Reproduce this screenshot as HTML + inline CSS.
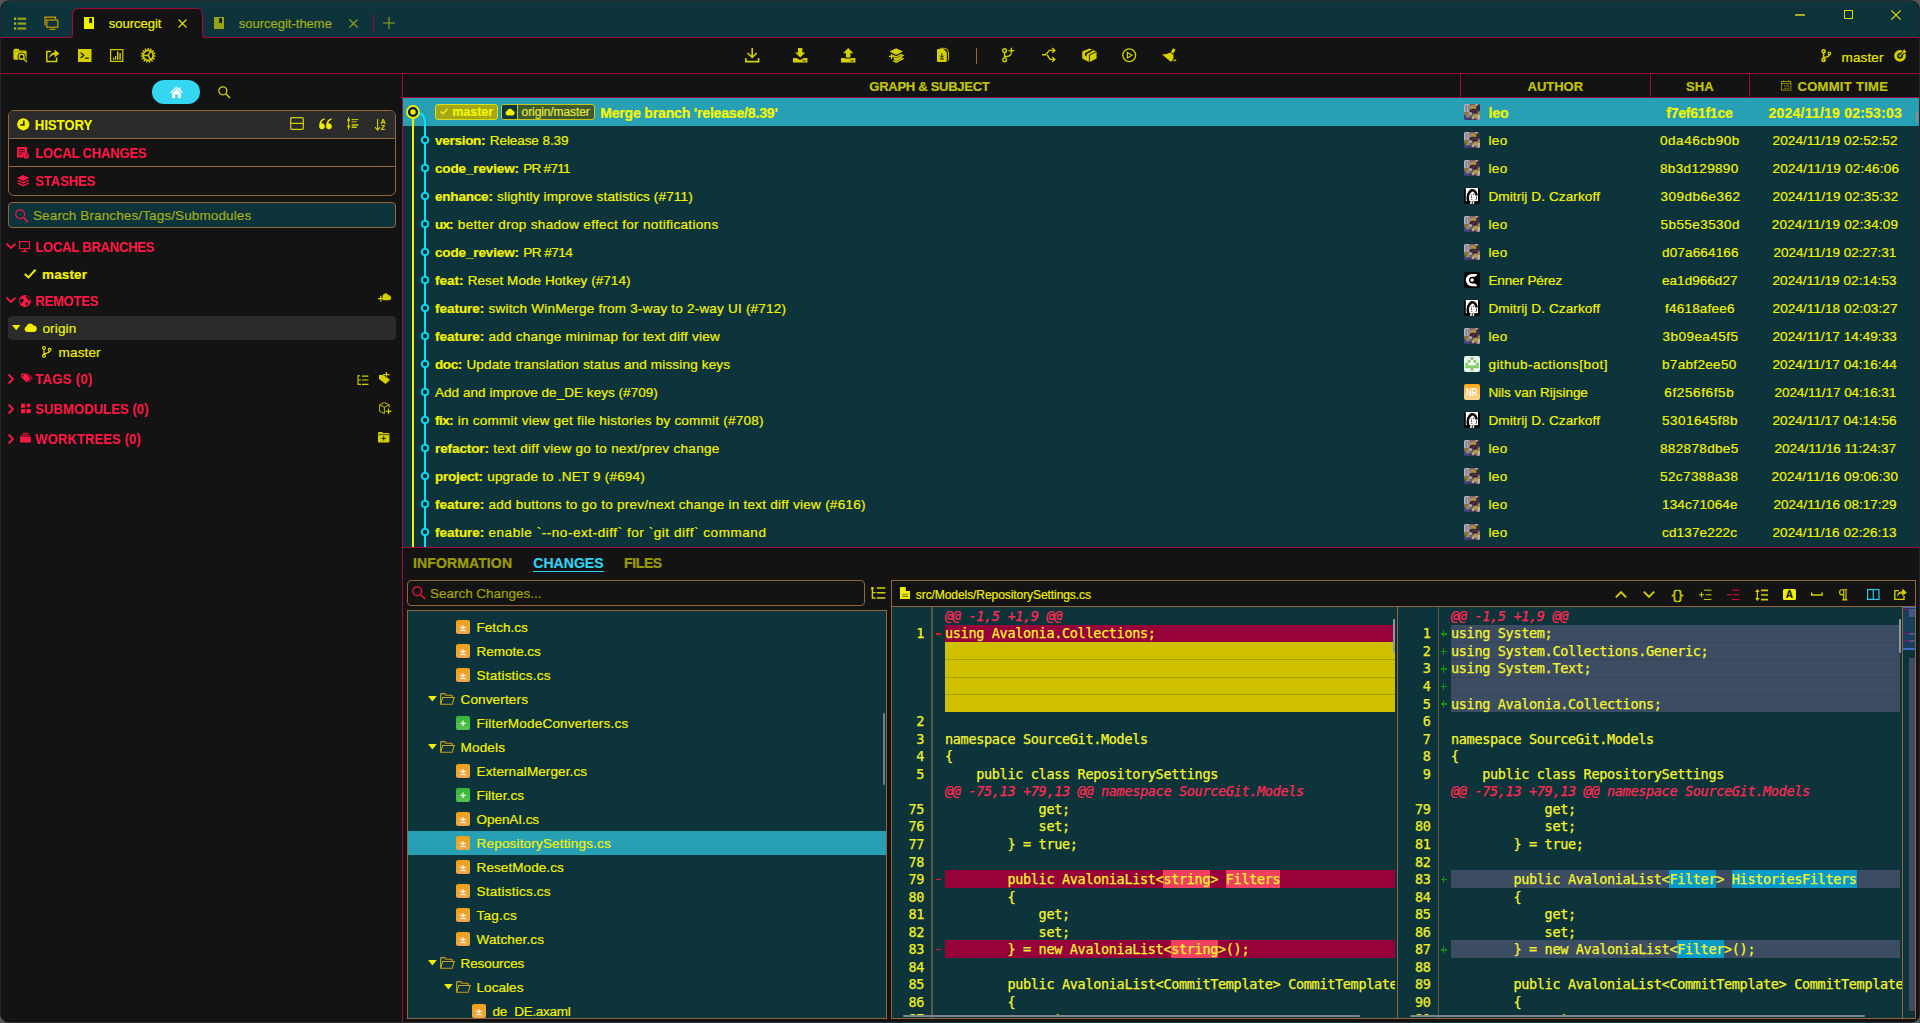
<!DOCTYPE html>
<html><head><meta charset="utf-8"><title>SourceGit</title>
<style>
*{box-sizing:border-box;margin:0;padding:0}
html,body{width:1920px;height:1023px;overflow:hidden;background:#555;}
body{font-family:"Liberation Sans","DejaVu Sans",sans-serif;font-size:14px;color:#f0f000;position:relative;-webkit-text-stroke:0.2px currentColor}
.abs{position:absolute}
.t{position:absolute;white-space:pre;line-height:1}
.b{font-weight:bold}
svg{position:absolute;overflow:visible}
.mono{font-family:"DejaVu Sans Mono","Liberation Mono",monospace;font-size:13.5px;letter-spacing:-0.3277px;-webkit-text-stroke:0.25px currentColor}
</style></head>
<body>
<div class="abs " style="left:1px;top:1px;width:1918px;height:1020.6px;background:#131313;border-radius:8px;box-shadow:0 0 0 0.6px #080808"></div>
<!-- titlebar -->
<div class="abs " style="left:1px;top:1px;width:1918px;height:37px;background:#0d333b;border-radius:8px 8px 0 0"></div>
<div class="abs " style="left:1px;top:37px;width:1918px;height:1px;background:#9b0b40"></div>
<svg style="left:64.6px;top:8px;" width="146" height="31" viewBox="0 0 146 31"><path d="M0 29.5 H4.2 Q7.500 29.5 7.5 26.2 V7 Q7.5 0.5 14 0.5 H131 Q137.500 0.5 137.5 7 V26.2 Q137.5 29.5 140.8 29.5 H145 V31 H0 Z" fill="#131313" stroke="none"/><path d="M0 29.5 H4.2 Q7.500 29.5 7.5 26.2 V7 Q7.5 0.5 14 0.5 H131 Q137.500 0.5 137.5 7 V26.2 Q137.5 29.5 140.8 29.5 H145" fill="none" stroke="#9b0b40" stroke-width="1.2"/></svg>
<svg style="left:14px;top:16.5px;" width="13" height="13" viewBox="0 0 13 13"><rect x="0" y="0.6" width="2.2" height="2.2" fill="#b9bd18"/><rect x="3.6" y="0.6" width="8.6" height="2.2" fill="rgba(240,240,0,0.6)"/><rect x="0" y="5.5" width="2.2" height="2.2" fill="#b9bd18"/><rect x="3.6" y="5.5" width="8.6" height="2.2" fill="rgba(240,240,0,0.6)"/><rect x="0" y="10.4" width="2.2" height="2.2" fill="#b9bd18"/><rect x="3.6" y="10.4" width="8.6" height="2.2" fill="rgba(240,240,0,0.6)"/></svg>
<svg style="left:43.5px;top:16px;" width="15" height="14" viewBox="0 0 15 14"><path d="M1 9.5 V1.2 H11.5 V3" fill="none" stroke="#d69a00" stroke-width="1.2"/><rect x="2.8" y="4" width="11" height="7.2" fill="none" stroke="#d69a00" stroke-width="1.2"/><path d="M5.5 13.3 H11.5" stroke="#d69a00" stroke-width="1.2"/></svg>
<svg style="left:84px;top:17px;" width="10" height="12" viewBox="0 0 10 12"><path d="M0 0 H10 V12 H0 Z" fill="#f2f200"/><path d="M5.2 1 H8 V6.6 L6.6 5.4 L5.2 6.6 Z" fill="#0c1a1a"/></svg>
<div class="t " style="left:108.7px;top:15.0px;font-size:13px;line-height:17px;color:#f2f200;">sourcegit</div>
<svg style="left:177.5px;top:18.5px;" width="9" height="9" viewBox="0 0 9 9"><path d="M0.5 0.5 L8.5 8.5 M8.5 0.5 L0.5 8.5" stroke="#e6e600" stroke-width="1.1" fill="none"/></svg>
<svg style="left:214px;top:17px;" width="10" height="12" viewBox="0 0 10 12"><path d="M0 0 H10 V12 H0 Z" fill="rgba(240,240,0,0.6)"/><path d="M5.2 1 H8 V6.6 L6.6 5.4 L5.2 6.6 Z" fill="#0c1a1a"/></svg>
<div class="t " style="left:238.7px;top:15.0px;font-size:13px;line-height:17px;color:rgba(240,240,0,0.6);">sourcegit-theme</div>
<svg style="left:348.5px;top:18.5px;" width="9" height="9" viewBox="0 0 9 9"><path d="M0.5 0.5 L8.5 8.5 M8.5 0.5 L0.5 8.5" stroke="rgba(240,240,0,0.6)" stroke-width="1.1" fill="none"/></svg>
<div class="abs " style="left:372.5px;top:14px;width:1px;height:19px;background:#9b0b40"></div>
<svg style="left:383px;top:17px;" width="12" height="12" viewBox="0 0 12 12"><path d="M6 0 V12 M0 6 H12" stroke="rgba(240,240,0,0.6)" stroke-width="1.1" fill="none"/></svg>
<div class="abs " style="left:1795px;top:14px;width:10px;height:2px;background:#a8ac1c"></div>
<div class="abs " style="left:1844px;top:10px;width:9.4px;height:9.3px;border:1.3px solid #d6d600"></div>
<svg style="left:1891px;top:10px;" width="10" height="10" viewBox="0 0 10 10"><path d="M0.3 0.3 L9.7 9.7 M9.7 0.3 L0.3 9.7" stroke="#e0e000" stroke-width="1.2" fill="none"/></svg>
<!-- toolbar -->
<div class="abs " style="left:1px;top:38px;width:1918px;height:35px;background:#131313"></div>
<div class="abs " style="left:1px;top:73px;width:1918px;height:1px;background:#9b0b40"></div>
<svg style="left:13px;top:48.3px;" width="15" height="14" viewBox="0 0 15 14"><path d="M0.4 2.4 Q0.4 0.8 2 0.8 H5.4 L6.8 2.4 H12.4 Q13.6 2.4 13.6 3.6 V10.6 Q13.6 11.8 12.4 11.8 H1.6 Q0.4 11.8 0.4 10.6 Z" fill="#d4d000"/><path d="M1.4 3.4 H12.6" stroke="#131313" stroke-width="0.5" opacity="0.5"/><circle cx="8.6" cy="8.8" r="4.1" fill="#131313"/><path d="M10 10.4 L14.4 14.6" stroke="#131313" stroke-width="3.4"/><circle cx="8.6" cy="8.8" r="2.5" fill="none" stroke="#d4d000" stroke-width="1.4"/><path d="M10.6 10.8 L14 14" stroke="#d4d000" stroke-width="1.5"/></svg>
<svg style="left:45.7px;top:49px;" width="14" height="13" viewBox="0 0 14 13"><path d="M5 2.6 H0.8 V12.4 H10.6 V8.6" fill="none" stroke="#d4d000" stroke-width="1.5"/><path d="M3.2 9.6 Q3.4 3.6 8.6 3.4 V0.4 L13.4 4.6 L8.6 8.6 V5.8 Q5 5.8 3.2 9.6 Z" fill="#d4d000"/></svg>
<svg style="left:77.8px;top:49px;" width="14" height="13" viewBox="0 0 14 13"><rect x="0" y="0" width="13.5" height="13" fill="#d4d000"/><path d="M2.6 3.6 L5.8 6.3 L2.6 9" fill="none" stroke="#131313" stroke-width="1.2"/><path d="M6.8 9.2 H10.8" stroke="#131313" stroke-width="1.2"/></svg>
<svg style="left:109.8px;top:49px;" width="14" height="13" viewBox="0 0 14 13"><rect x="0.6" y="0.6" width="12.2" height="11.8" fill="none" stroke="#d4d000" stroke-width="1.2"/><rect x="3" y="8.6" width="1.2" height="2.2" fill="#d4d000"/><rect x="5" y="7" width="1.2" height="3.8" fill="#d4d000"/><rect x="7" y="2.4" width="1.4" height="8.4" fill="#d4d000"/><rect x="9.4" y="4" width="1.4" height="6.8" fill="#d4d000"/></svg>
<svg style="left:141px;top:47.5px;" width="15" height="15" viewBox="0 0 15 15"><g transform="translate(7.2,7.4)"><rect x="-0.7" y="-7.4" width="1.4" height="2" fill="#d4d000" transform="rotate(0)"/><rect x="-0.7" y="-7.4" width="1.4" height="2" fill="#d4d000" transform="rotate(24)"/><rect x="-0.7" y="-7.4" width="1.4" height="2" fill="#d4d000" transform="rotate(48)"/><rect x="-0.7" y="-7.4" width="1.4" height="2" fill="#d4d000" transform="rotate(72)"/><rect x="-0.7" y="-7.4" width="1.4" height="2" fill="#d4d000" transform="rotate(96)"/><rect x="-0.7" y="-7.4" width="1.4" height="2" fill="#d4d000" transform="rotate(120)"/><rect x="-0.7" y="-7.4" width="1.4" height="2" fill="#d4d000" transform="rotate(144)"/><rect x="-0.7" y="-7.4" width="1.4" height="2" fill="#d4d000" transform="rotate(168)"/><rect x="-0.7" y="-7.4" width="1.4" height="2" fill="#d4d000" transform="rotate(192)"/><rect x="-0.7" y="-7.4" width="1.4" height="2" fill="#d4d000" transform="rotate(216)"/><rect x="-0.7" y="-7.4" width="1.4" height="2" fill="#d4d000" transform="rotate(240)"/><rect x="-0.7" y="-7.4" width="1.4" height="2" fill="#d4d000" transform="rotate(264)"/><rect x="-0.7" y="-7.4" width="1.4" height="2" fill="#d4d000" transform="rotate(288)"/><rect x="-0.7" y="-7.4" width="1.4" height="2" fill="#d4d000" transform="rotate(312)"/><rect x="-0.7" y="-7.4" width="1.4" height="2" fill="#d4d000" transform="rotate(336)"/><circle r="5" fill="none" stroke="#d4d000" stroke-width="1.7"/><path d="M0 0 L-4.6 0 M0 0 L2.4 -4.2 M0 0 L2.4 4.2" stroke="#d4d000" stroke-width="1.5"/></g></svg>
<svg style="left:744.6px;top:47.8px;" width="15" height="15" viewBox="0 0 15 15"><path d="M7.2 0 V9 M2.6 5 L7.2 9.4 L11.8 5" fill="none" stroke="#d4d000" stroke-width="1.6"/><path d="M0.8 10 V13.6 H13.6 V10" fill="none" stroke="#d4d000" stroke-width="1.6"/></svg>
<svg style="left:792.8px;top:47.8px;" width="15" height="15" viewBox="0 0 15 15"><path d="M5 0 H9.4 V4.4 H12.4 L7.2 9.6 L2 4.4 H5 Z" fill="#d4d000"/><path d="M0 10 H3.4 L7.2 12 L11 10 H14.4 V14.4 H0 Z" fill="#d4d000"/><rect x="9.6" y="12.4" width="3" height="0.9" fill="#131313"/></svg>
<svg style="left:840.8px;top:47.8px;" width="15" height="15" viewBox="0 0 15 15"><path d="M5 9.4 H9.4 V5.2 H12.4 L7.2 0 L2 5.2 H5 Z" fill="#d4d000"/><path d="M0 10 H4 V10.6 H10.4 V10 H14.4 V14.4 H0 Z" fill="#d4d000"/><rect x="9.6" y="12.4" width="3" height="0.9" fill="#131313"/></svg>
<svg style="left:888.9px;top:47.8px;" width="15" height="15" viewBox="0 0 15 15"><path d="M7.2 0.2 L14 3.6 L7.2 7 L0.4 3.6 Z" fill="#d4d000"/><path d="M3.4 7.2 L7.2 9 L12 6.6 L14 7.6 L7.2 11 L4.6 9.7" fill="none" stroke="#d4d000" stroke-width="1.3"/><path d="M5 11 L7.2 12.2 L12 9.8 L14 10.8 L7.2 14.2 L4.2 12.7" fill="none" stroke="#d4d000" stroke-width="1.3"/><path d="M0 8.4 H5 M2.5 5.9 V10.9" stroke="#d4d000" stroke-width="1.3"/></svg>
<svg style="left:936.7px;top:47.8px;" width="13" height="15" viewBox="0 0 13 15"><path d="M0 2 Q0 1 1 1 H6.6 L9.8 4.2 V13 Q9.8 14 8.8 14 H1 Q0 14 0 13 Z" fill="#d4d000"/><path d="M3 0.3 H8 Q11.6 1 11.6 5 V12.4" fill="none" stroke="#d4d000" stroke-width="0.9"/><path d="M4.9 5.4 V9.2 M3.2 7.8 L4.9 9.6 L6.6 7.8 M3 11 H6.8" stroke="#131313" stroke-width="1" fill="none"/></svg>
<div class="abs " style="left:976px;top:48px;width:1px;height:16px;background:#94653a"></div>
<svg style="left:1001.6px;top:47.8px;" width="14" height="15" viewBox="0 0 14 15"><circle cx="2.6" cy="2.6" r="1.9" fill="none" stroke="#d4d000" stroke-width="1.4"/><circle cx="2.6" cy="11.8" r="1.9" fill="none" stroke="#d4d000" stroke-width="1.4"/><path d="M2.6 4.6 V9.8 M2.6 8.8 Q8.6 8.6 9 5.6" fill="none" stroke="#d4d000" stroke-width="1.4"/><path d="M6.4 2.6 H12.4 M9.4 -0.2 V5.4" stroke="#d4d000" stroke-width="1.4"/></svg>
<svg style="left:1042px;top:48.2px;" width="14" height="14" viewBox="0 0 14 14"><path d="M0 6.8 H3.6 L7.4 2.4 H12.4 M5.2 6.8 L8 11.4 H12.4" fill="none" stroke="#d4d000" stroke-width="1.4"/><path d="M10.2 0 L12.8 2.4 L10.2 4.8 M10.2 9 L12.8 11.4 L10.2 13.8" fill="none" stroke="#d4d000" stroke-width="1.4"/></svg>
<svg style="left:1081.5px;top:47.8px;" width="15" height="15" viewBox="0 0 15 15"><path d="M7.4 0.4 L14.6 3.6 V10.6 L7.4 14.2 L0.2 10.6 V3.6 Z" fill="#d4d000"/><path d="M7.4 7 V14 M7.4 7 L14.4 3.8" stroke="#131313" stroke-width="0.9" fill="none"/><path d="M3 5 L9.6 1.8 L11.4 2.6 L4.6 5.9 V8.6 L3 7.8 Z" fill="#131313"/></svg>
<svg style="left:1121.6px;top:47.8px;" width="15" height="15" viewBox="0 0 15 15"><circle cx="7.2" cy="7.2" r="6.4" fill="none" stroke="#d4d000" stroke-width="1.3"/><path d="M5.4 4.4 L10 7.2 L5.4 10 Z" fill="none" stroke="#d4d000" stroke-width="1.2"/></svg>
<svg style="left:1161.8px;top:47.8px;" width="15" height="15" viewBox="0 0 15 15"><path d="M11 0.2 L13.6 1.6 L11.4 5.6 L8.8 4.2 Z" fill="#d4d000"/><path d="M8.2 4.6 L11.2 6.4 Q12.6 10.4 9 14 L0 6.6 Q5 6.6 8.2 4.6 Z" fill="#d4d000"/><path d="M11 12.6 H14 M12.6 11 L14 12.6" stroke="#d4d000" stroke-width="0.9" fill="none"/></svg>
<svg style="left:1821.4px;top:49px;" width="11" height="13" viewBox="0 0 11 13"><circle cx="2.6" cy="2.3" r="1.5" fill="none" stroke="#d4d000" stroke-width="1.7"/><circle cx="2.6" cy="10.9" r="1.5" fill="none" stroke="#d4d000" stroke-width="1.7"/><circle cx="8.4" cy="4.4" r="1.3" fill="none" stroke="#d4d000" stroke-width="1.2"/><path d="M2.6 3.8 V9.4 M2.6 8.2 Q7.8 8.2 8.3 5.8" fill="none" stroke="#d4d000" stroke-width="1.6"/></svg>
<div class="t " style="left:1841.6px;top:48.65px;font-size:13.5px;line-height:17.5px;color:#e8e800;letter-spacing:0.107px;">master</div>
<svg style="left:1893.6px;top:49px;" width="13" height="13" viewBox="0 0 13 13"><circle cx="6" cy="6.8" r="4.4" fill="none" stroke="#d4d000" stroke-width="3"/><circle cx="6" cy="6.8" r="1.1" fill="none" stroke="#d4d000" stroke-width="0.9"/><path d="M6.4 6.400 L12.400 0.400" stroke="#131313" stroke-width="3.2"/><path d="M6 6.800 L9.800 3" stroke="#d4d000" stroke-width="1.1"/><path d="M8.600 4.200 L9 1.800 L10.800 0 L11 1.900 L12.800 2.100 L11 3.900 Z" fill="#d4d000"/></svg>
<!-- sidebar -->
<div class="abs " style="left:402px;top:74px;width:1px;height:947.6px;background:#9b0b40"></div>
<div class="abs " style="left:152px;top:80px;width:48px;height:24px;background:#35d6f2;border-radius:12px"></div>
<svg style="left:169.5px;top:86px;" width="13" height="12" viewBox="0 0 13 12"><path d="M6.5 0.4 L0 6.4 L0.9 7.3 L6.5 2.2 L12.1 7.3 L13 6.4 L10.6 4.2 V1.4 H9.4 V3.1 Z" fill="#fff"/><path d="M6.5 3.2 L2 7.3 V12 H5.2 V8.4 H7.8 V12 H11 V7.3 Z" fill="#fff"/></svg>
<svg style="left:218px;top:86px;" width="13" height="13" viewBox="0 0 13 13"><circle cx="4.8" cy="4.8" r="4" fill="none" stroke="#d4d000" stroke-width="1.3"/><path d="M7.8 7.8 L12 12" stroke="#d4d000" stroke-width="1.5"/></svg>
<div class="abs " style="left:8px;top:110px;width:388px;height:86px;border:1px solid #94653a;border-radius:6px;overflow:hidden"><div class="abs " style="left:0px;top:0px;width:386px;height:27px;background:#2b2b2b"></div><div class="abs " style="left:0px;top:27px;width:386px;height:1px;background:#94653a"></div><div class="abs " style="left:0px;top:55px;width:386px;height:1px;background:#94653a"></div></div>
<svg style="left:17px;top:118px;" width="13" height="13" viewBox="0 0 13 13"><circle cx="6.3" cy="6.3" r="6.1" fill="#f0f000"/><path d="M6.8 2.6 V6.8 H3.4" fill="none" stroke="#2b2b2b" stroke-width="1.7"/></svg>
<div class="t " style="left:35px;top:116.5px;font-size:13px;line-height:17px;color:#f4f400;font-weight:bold;letter-spacing:0.05px;transform:scaleY(1.07);transform-origin:50% 75%;">HISTORY</div>
<svg style="left:17px;top:147px;" width="13" height="13" viewBox="0 0 13 13"><path d="M0 0.8 Q0 0 0.8 0 H9.2 Q10 0 10 0.8 V6.2 A3.6 3.6 0 0 0 6 10.6 H0.8 Q0 10.6 0 9.8 Z" fill="#ff1744"/><path d="M1.6 2.6 H8 M1.6 4.8 H8 M1.6 7 H5" stroke="#131313" stroke-width="0.9"/><circle cx="9.2" cy="9" r="2.8" fill="#ff1744"/><path d="M9.2 7.4 V9.2 H10.6" fill="none" stroke="#131313" stroke-width="0.8"/></svg>
<div class="t " style="left:35.5px;top:144.5px;font-size:13px;line-height:17px;color:#ff1744;font-weight:bold;letter-spacing:-0.14px;transform:scaleY(1.07);transform-origin:50% 75%;">LOCAL CHANGES</div>
<svg style="left:17px;top:175px;" width="13" height="12" viewBox="0 0 13 12"><path d="M6.2 0 L12.4 3 L6.2 6 L0 3 Z" fill="#ff1744"/><path d="M1.6 5 L6.2 7.2 L10.8 5 L12.4 5.8 L6.2 8.8 L0 5.8 Z" fill="#ff1744"/><path d="M1.6 7.8 L6.2 10 L10.8 7.8 L12.4 8.6 L6.2 11.6 L0 8.6 Z" fill="#ff1744"/></svg>
<div class="t " style="left:35.5px;top:172.5px;font-size:13px;line-height:17px;color:#ff1744;font-weight:bold;letter-spacing:-0.05px;transform:scaleY(1.07);transform-origin:50% 75%;">STASHES</div>
<svg style="left:290px;top:117px;" width="14" height="13" viewBox="0 0 14 13"><rect x="0.7" y="0.7" width="12.6" height="11.6" rx="1" fill="none" stroke="#d4d000" stroke-width="1.2"/><path d="M0.7 6.4 H13.3" stroke="#d4d000" stroke-width="1.2"/></svg>
<svg style="left:318.6px;top:117.8px;" width="13" height="12" viewBox="0 0 13 12"><path d="M5.6 0.2 Q0.2 1.6 0.2 7.6 V8.6 A2.8 3 0 1 0 2.4 5.4 Q2.6 2.6 5.8 1.5 Z" fill="#f0f000"/><path d="M12.6 0.2 Q7.2 1.6 7.2 7.6 V8.6 A2.8 3 0 1 0 9.4 5.4 Q9.6 2.6 12.8 1.5 Z" fill="#f0f000"/></svg>
<svg style="left:346.6px;top:117.4px;" width="12" height="13" viewBox="0 0 12 13"><path d="M1.6 0 V12.6" stroke="#d4d000" stroke-width="1"/><path d="M0 3 L1.6 1.2 L3.2 3 Z M0 9.6 L1.6 11.4 L3.2 9.6 Z" fill="#d4d000"/><circle cx="1.6" cy="3.6" r="1.2" fill="#d4d000"/><circle cx="1.6" cy="9" r="1.2" fill="#d4d000"/><path d="M4.6 2.6 H11.4 M4.6 4.8 H9.6" stroke="#d4d000" stroke-width="1"/><path d="M4.6 8 H11.4 M4.6 10.2 H9.6" stroke="#d4d000" stroke-width="1.5"/></svg>
<svg style="left:375px;top:119px;" width="6" height="12" viewBox="0 0 6 12"><path d="M2.6 0 V11 M0 8.2 L2.6 11.2 L5.2 8.2" fill="none" stroke="#d4d000" stroke-width="1.1"/></svg>
<div class="t " style="left:380.6px;top:116.1px;font-size:7px;line-height:11px;color:#d4d000;font-weight:bold;">A</div>
<div class="t " style="left:380.8px;top:122.1px;font-size:7px;line-height:11px;color:#d4d000;font-weight:bold;">Z</div>
<div class="abs " style="left:8px;top:202px;width:388px;height:26px;border:1px solid #94653a;border-radius:4px;background:#0d333b"></div>
<svg style="left:15px;top:208.6px;" width="14" height="14" viewBox="0 0 14 14"><circle cx="5.2" cy="5.2" r="4.4" fill="none" stroke="#ff1744" stroke-width="1.2"/><path d="M8.4 8.4 L13 13" stroke="#ff1744" stroke-width="1.4"/></svg>
<div class="t " style="left:33px;top:206.75px;font-size:13.5px;line-height:17.5px;color:rgba(240,240,0,0.6);letter-spacing:0.12px;">Search Branches/Tags/Submodules</div>
<svg style="left:6px;top:243px;" width="10" height="6" viewBox="0 0 10 6"><path d="M0.5 0.6 L5 5 L9.5 0.6" fill="none" stroke="#ff1744" stroke-width="1.8"/></svg>
<svg style="left:19px;top:241px;" width="11" height="11" viewBox="0 0 11 11"><rect x="0.6" y="0.6" width="9.8" height="7" fill="none" stroke="#ff1744" stroke-width="1.1"/><path d="M5.5 7.6 V10 M2.4 10.4 H8.6" stroke="#ff1744" stroke-width="1.1"/></svg>
<div class="t " style="left:35.5px;top:238.5px;font-size:13px;line-height:17px;color:#ff1744;font-weight:bold;letter-spacing:-0.2px;transform:scaleY(1.07);transform-origin:50% 75%;">LOCAL BRANCHES</div>
<svg style="left:24px;top:269px;" width="13" height="10" viewBox="0 0 13 10"><path d="M0.8 5 L4.4 8.4 L11.6 0.8" fill="none" stroke="#f0f000" stroke-width="2"/></svg>
<div class="t " style="left:42px;top:265.65px;font-size:13.5px;line-height:17.5px;color:#f4f400;font-weight:bold;letter-spacing:0.144px;">master</div>
<svg style="left:6px;top:297px;" width="10" height="6" viewBox="0 0 10 6"><path d="M0.5 0.6 L5 5 L9.5 0.6" fill="none" stroke="#ff1744" stroke-width="1.8"/></svg>
<svg style="left:19px;top:295px;" width="12" height="12" viewBox="0 0 12 12"><circle cx="6" cy="6" r="5.9" fill="#ff1744"/><path d="M1.2 4.2 Q3.4 3 4.6 4.4 Q5.4 5.4 4.2 6.2 Q2.6 6.8 3 8.6 L1.6 8 Q0.6 6 1.2 4.2 Z M6.8 0.8 Q6 2.2 7.6 2.8 Q9 3 8.8 4.4 Q8.6 5.6 10.2 5.6 L11.4 5 Q11 2 8.6 1 Z M6.2 7.6 Q8 7 9 8.2 Q9.2 9.6 7.8 10.8 Q6.4 10.4 6.2 7.6 Z" fill="#131313"/></svg>
<div class="t " style="left:35.5px;top:292.5px;font-size:13px;line-height:17px;color:#ff1744;font-weight:bold;letter-spacing:-0.18px;transform:scaleY(1.07);transform-origin:50% 75%;">REMOTES</div>
<svg style="left:378.4px;top:292.4px;" width="13" height="10" viewBox="0 0 13 10"><path d="M4.4 4.2 A3.2 3.2 0 0 1 10.4 3 A2.6 2.6 0 0 1 10.6 8.2 H5 Z" fill="#d4d000"/><path d="M0 6.6 H5.6 M2.8 3.8 V9.4" stroke="#d4d000" stroke-width="1.2"/></svg>
<div class="abs " style="left:8px;top:316px;width:388px;height:24px;background:#2b2b2b;border-radius:4px"></div>
<svg style="left:12px;top:325px;" width="9" height="6" viewBox="0 0 9 6"><path d="M0 0 H8.4 L4.2 5.2 Z" fill="#f0f000"/></svg>
<svg style="left:23.5px;top:323px;" width="13" height="9" viewBox="0 0 13 9"><path d="M3 9 A3 3 0 0 1 2.6 3.2 A3.6 3.6 0 0 1 9.4 2.6 A3.2 3.2 0 0 1 9.6 9 Z" fill="#f0f000"/></svg>
<div class="t " style="left:42.4px;top:319.65px;font-size:13.5px;line-height:17.5px;color:#f0f000;letter-spacing:0.174px;">origin</div>
<svg style="left:41.5px;top:346.4px;" width="10" height="12" viewBox="0 0 10 12"><circle cx="2" cy="1.9" r="1.4" fill="none" stroke="#f0f000" stroke-width="1.1"/><circle cx="2" cy="9.8" r="1.4" fill="none" stroke="#f0f000" stroke-width="1.1"/><circle cx="7.6" cy="3.8" r="1.4" fill="none" stroke="#f0f000" stroke-width="1.1"/><path d="M2 3.3 V8.4 M2 7.6 Q7.2 7.4 7.6 5.2" fill="none" stroke="#f0f000" stroke-width="1.1"/></svg>
<div class="t " style="left:58.6px;top:344.05px;font-size:13.5px;line-height:17.5px;color:#f0f000;letter-spacing:0.147px;">master</div>
<svg style="left:8px;top:374px;" width="6" height="10" viewBox="0 0 6 10"><path d="M0.6 0.5 L5 5 L0.6 9.5" fill="none" stroke="#ff1744" stroke-width="1.8"/></svg>
<svg style="left:20.6px;top:373px;" width="12" height="10" viewBox="0 0 12 10"><path d="M0.4 0.6 H5 L9.6 5.2 L5.6 9.2 L0.4 4.6 Z" fill="#ff1744"/><circle cx="2.4" cy="2.6" r="0.8" fill="#131313"/><path d="M6.6 0.6 L11.4 5.2 L7.4 9.2" fill="none" stroke="#ff1744" stroke-width="1"/></svg>
<div class="t " style="left:35.5px;top:370.9px;font-size:13px;line-height:17px;color:#ff1744;font-weight:bold;letter-spacing:0.36px;transform:scaleY(1.07);transform-origin:50% 75%;">TAGS (0)</div>
<svg style="left:357px;top:374.6px;" width="12" height="11" viewBox="0 0 12 11"><path d="M1 0 V9.4 H4 M1 5 H4" fill="none" stroke="#d4d000" stroke-width="1.1"/><path d="M1 0.8 H2.6" stroke="#d4d000" stroke-width="1.6"/><path d="M5 1.2 H11.4 M5 5 H11.4 M5 9.4 H11.4" stroke="#d4d000" stroke-width="1.2"/></svg>
<svg style="left:378.6px;top:372px;" width="12" height="12" viewBox="0 0 12 12"><path d="M0 3 H5.4 L11 8 L6.6 12 L0 7 Z" fill="#d4d000"/><path d="M4 2.6 H10.6 M7.4 0 V5.6" stroke="#d4d000" stroke-width="1.3"/><path d="M4.6 3.4 H6.6 V5 H8.2 V3.4" fill="none" stroke="#131313" stroke-width="0.6"/></svg>
<svg style="left:8px;top:404px;" width="6" height="10" viewBox="0 0 6 10"><path d="M0.6 0.5 L5 5 L0.6 9.5" fill="none" stroke="#ff1744" stroke-width="1.8"/></svg>
<svg style="left:20.8px;top:403px;" width="10" height="11" viewBox="0 0 10 11"><rect x="0" y="0.6" width="4.2" height="4.2" fill="#ff1744"/><rect x="0" y="6" width="4.2" height="4.2" fill="#ff1744"/><rect x="5.4" y="6" width="4.2" height="4.2" fill="#ff1744"/><path d="M7.5 0 L9.9 2.4 L7.5 4.8 L5.1 2.4 Z" fill="#ff1744"/></svg>
<div class="t " style="left:35.5px;top:400.9px;font-size:13px;line-height:17px;color:#ff1744;font-weight:bold;letter-spacing:0.1px;transform:scaleY(1.07);transform-origin:50% 75%;">SUBMODULES (0)</div>
<svg style="left:378.6px;top:402px;" width="13" height="13" viewBox="0 0 13 13"><path d="M5.4 0.5 L10.2 2.8 V5.4 M5.4 11.6 L0.6 9.2 V2.8 L5.4 0.5 M0.6 2.8 L5.4 5.2 L10.2 2.8 M5.4 5.2 V11.6" fill="none" stroke="#d4d000" stroke-width="0.9"/><path d="M6.8 9.4 H12.4 M9.6 6.6 V12.2" stroke="#d4d000" stroke-width="1.1"/></svg>
<svg style="left:8px;top:434px;" width="6" height="10" viewBox="0 0 6 10"><path d="M0.6 0.5 L5 5 L0.6 9.5" fill="none" stroke="#ff1744" stroke-width="1.8"/></svg>
<svg style="left:20.2px;top:433.4px;" width="11" height="10" viewBox="0 0 11 10"><path d="M2.6 0.4 H8.2 M1.4 2.2 H9.4" stroke="#ff1744" stroke-width="1"/><path d="M0 3.6 H10.8 V8.4 Q10.8 9.4 9.8 9.4 H1 Q0 9.4 0 8.4 Z" fill="#ff1744"/></svg>
<div class="t " style="left:35.5px;top:430.9px;font-size:13px;line-height:17px;color:#ff1744;font-weight:bold;letter-spacing:0.13px;transform:scaleY(1.07);transform-origin:50% 75%;">WORKTREES (0)</div>
<svg style="left:378px;top:432px;" width="12" height="11" viewBox="0 0 12 11"><path d="M0 1 Q0 0 1 0 H4 L5 1 H10.4 Q11.4 1 11.4 2 V9.6 Q11.4 10.6 10.4 10.6 H1 Q0 10.6 0 9.6 Z" fill="#d4d000"/><path d="M0.4 2.6 H11" stroke="#131313" stroke-width="0.7"/><path d="M3.4 6.4 H8 M5.7 4.2 V8.6" stroke="#131313" stroke-width="0.9"/></svg>
<!-- history -->
<div class="abs " style="left:403px;top:74px;width:1516px;height:23px;background:#131313"></div>
<div class="abs " style="left:403px;top:97px;width:1516px;height:1px;background:#9b0b40"></div>
<div class="abs " style="left:1460px;top:74px;width:1px;height:23px;background:#9b0b40"></div>
<div class="abs " style="left:1650px;top:74px;width:1px;height:23px;background:#9b0b40"></div>
<div class="abs " style="left:1749px;top:74px;width:1px;height:23px;background:#9b0b40"></div>
<div class="t " style="left:869.3px;top:78.0px;font-size:13px;line-height:17px;color:#c2c40c;font-weight:bold;letter-spacing:-0.27px;">GRAPH &amp; SUBJECT</div>
<div class="t " style="left:1527.5px;top:78.0px;font-size:13px;line-height:17px;color:#c2c40c;font-weight:bold;">AUTHOR</div>
<div class="t " style="left:1686px;top:78.0px;font-size:13px;line-height:17px;color:#c2c40c;font-weight:bold;letter-spacing:0.1px;">SHA</div>
<svg style="left:1780.6px;top:80px;" width="11" height="11" viewBox="0 0 11 11"><rect x="0.5" y="1.5" width="9.4" height="8.6" fill="none" stroke="rgba(240,240,0,0.6)" stroke-width="0.9"/><path d="M0.5 3.6 H10 M2.6 0.4 V2 M7.8 0.4 V2" stroke="rgba(240,240,0,0.6)" stroke-width="0.9"/><text x="5.2" y="9" font-size="5" font-family="Liberation Sans, sans-serif" fill="rgba(240,240,0,0.6)" text-anchor="middle">15</text></svg>
<div class="t " style="left:1797.5px;top:78.0px;font-size:13px;line-height:17px;color:#c2c40c;font-weight:bold;letter-spacing:0.3px;">COMMIT TIME</div>
<div class="abs " style="left:403px;top:98px;width:1516px;height:449px;background:#0d333b"></div>
<div class="abs " style="left:403px;top:98px;width:1516px;height:28px;background:#27a0b4"></div>
<div class="abs " style="left:403px;top:547px;width:1516px;height:1px;background:#9b0b40"></div>
<div class="abs " style="left:1916.4px;top:110.5px;width:2px;height:11.5px;background:#8a8f92;border-radius:1px"></div>
<svg style="left:403px;top:98px;" width="40" height="449" viewBox="0 0 40 449"><path d="M10 14 V449" stroke="#f0f000" stroke-width="2" fill="none"/><path d="M16 15 Q22 15.500 22 26 V449" stroke="#00e5ff" stroke-width="2" fill="none"/><circle cx="22" cy="42" r="3.2" fill="#0d333b" stroke="#00e5ff" stroke-width="1.7"/><circle cx="22" cy="70" r="3.2" fill="#0d333b" stroke="#00e5ff" stroke-width="1.7"/><circle cx="22" cy="98" r="3.2" fill="#0d333b" stroke="#00e5ff" stroke-width="1.7"/><circle cx="22" cy="126" r="3.2" fill="#0d333b" stroke="#00e5ff" stroke-width="1.7"/><circle cx="22" cy="154" r="3.2" fill="#0d333b" stroke="#00e5ff" stroke-width="1.7"/><circle cx="22" cy="182" r="3.2" fill="#0d333b" stroke="#00e5ff" stroke-width="1.7"/><circle cx="22" cy="210" r="3.2" fill="#0d333b" stroke="#00e5ff" stroke-width="1.7"/><circle cx="22" cy="238" r="3.2" fill="#0d333b" stroke="#00e5ff" stroke-width="1.7"/><circle cx="22" cy="266" r="3.2" fill="#0d333b" stroke="#00e5ff" stroke-width="1.7"/><circle cx="22" cy="294" r="3.2" fill="#0d333b" stroke="#00e5ff" stroke-width="1.7"/><circle cx="22" cy="322" r="3.2" fill="#0d333b" stroke="#00e5ff" stroke-width="1.7"/><circle cx="22" cy="350" r="3.2" fill="#0d333b" stroke="#00e5ff" stroke-width="1.7"/><circle cx="22" cy="378" r="3.2" fill="#0d333b" stroke="#00e5ff" stroke-width="1.7"/><circle cx="22" cy="406" r="3.2" fill="#0d333b" stroke="#00e5ff" stroke-width="1.7"/><circle cx="22" cy="434" r="3.2" fill="#0d333b" stroke="#00e5ff" stroke-width="1.7"/><circle cx="10" cy="14" r="6" fill="#0b1f3a" stroke="#f0f000" stroke-width="1.8"/><circle cx="10" cy="14" r="2.7" fill="#f0f000"/></svg>
<div class="abs " style="left:435px;top:104px;width:63px;height:16px;background:#a4a818;border:1px solid #dede14;border-radius:3px"></div>
<svg style="left:440px;top:108.4px;" width="8" height="7" viewBox="0 0 8 7"><path d="M0.6 3.4 L3 5.8 L7.4 0.8" fill="none" stroke="#e8e818" stroke-width="1.7"/></svg>
<div class="t " style="left:452.2px;top:103.75px;font-size:12.5px;line-height:16.5px;color:#f6f600;font-weight:bold;">master</div>
<div class="abs " style="left:501px;top:104px;width:94px;height:16px;background:#3f5a30;border:1px solid #c4c814;border-radius:3px;overflow:hidden"><div class="abs " style="left:0px;top:0px;width:15px;height:14px;background:#0f3540"></div><div class="abs " style="left:15px;top:0px;width:1px;height:14px;background:#c4c814"></div></div>
<svg style="left:505px;top:108px;" width="10" height="8" viewBox="0 0 10 8"><path d="M2.4 7.4 A2.4 2.4 0 0 1 2.2 2.8 A3 3 0 0 1 7.8 2.4 A2.6 2.6 0 0 1 7.8 7.4 Z" fill="#f0f000"/></svg>
<div class="t " style="left:521.6px;top:104.0px;font-size:12px;line-height:16px;color:#e6e63c;letter-spacing:-0.1px;">origin/master</div>
<div class="t " style="left:600.2px;top:103.8px;font-size:14px;line-height:18px;color:#f8f800;font-weight:bold;letter-spacing:-0.16px;">Merge branch &#39;release/8.39&#39;</div>
<svg style="left:1464px;top:104px;" width="16" height="16" viewBox="0 0 16 16"><defs><clipPath id="ac1"><rect width="16" height="16" rx="2"/></clipPath><filter id="af1" x="-10%" y="-10%" width="120%" height="120%"><feGaussianBlur stdDeviation="0.55"/></filter></defs><g clip-path="url(#ac1)"><rect width="16" height="16" fill="#6b6478"/><g filter="url(#af1)"><rect x="-1" y="-1" width="6.5" height="9" fill="#d9d0d2"/><rect x="1.6" y="1" width="1.6" height="6" fill="#8c86b0"/><rect x="4" y="1" width="1" height="5" fill="#9a92b8"/><ellipse cx="9" cy="3.4" rx="3.2" ry="2.4" fill="#d2a022"/><rect x="12.4" y="-1" width="4.6" height="7.5" fill="#241c2a"/><rect x="11.4" y="-0.5" width="2.6" height="2" fill="#e4d8a8"/><ellipse cx="9.4" cy="7.6" rx="4" ry="2.9" fill="#17111c"/><rect x="7.4" y="6.4" width="4.4" height="0.9" fill="#7a2c3c"/><rect x="7.6" y="8.4" width="3.6" height="0.8" fill="#5a2434"/><ellipse cx="2.6" cy="9.4" rx="2.8" ry="2" fill="#a07c2c"/><ellipse cx="6.4" cy="9.6" rx="2" ry="1.6" fill="#c4c0cc"/><rect x="-1" y="11.2" width="8" height="6" fill="#2b3e9c"/><ellipse cx="4" cy="12.2" rx="2.4" ry="1.1" fill="#c8a030"/><ellipse cx="11.4" cy="12" rx="2.6" ry="2.6" fill="#d8ac30"/><rect x="13.6" y="10.6" width="3" height="6" fill="#dcd2da"/><rect x="14.2" y="8" width="2.4" height="2.6" fill="#c49a34"/><rect x="5.6" y="14.4" width="6.4" height="2" fill="#4c2630"/><rect x="8.2" y="12.6" width="1.6" height="2.6" fill="#ece4da"/><rect x="0" y="15" width="5" height="1.4" fill="#3a2c6c"/></g><rect width="16" height="16" fill="#5c586c" opacity="0.28"/></g></svg>
<div class="t " style="left:1488.4px;top:103.8px;font-size:14px;line-height:18px;color:#f4f400;font-weight:bold;letter-spacing:-0.017px;">leo</div>
<div class="t " style="left:1666.2px;top:103.8px;font-size:14px;line-height:18px;color:#f4f400;font-weight:bold;letter-spacing:-0.211px;">f7ef61f1ce</div>
<div class="t " style="left:1768.6px;top:103.8px;font-size:14px;line-height:18px;color:#f4f400;font-weight:bold;letter-spacing:0.22px;">2024/11/19 02:53:03</div>
<div class="t " style="left:435px;top:132.05px;font-size:13.5px;line-height:17.5px;color:#f4f400;font-weight:bold;letter-spacing:-0.276px;">version:</div>
<div class="t " style="left:489.8px;top:132.05px;font-size:13.5px;line-height:17.5px;color:#f4f400;letter-spacing:-0.078px;">Release 8.39</div>
<svg style="left:1464px;top:132px;" width="16" height="16" viewBox="0 0 16 16"><defs><clipPath id="ac2"><rect width="16" height="16" rx="2"/></clipPath><filter id="af2" x="-10%" y="-10%" width="120%" height="120%"><feGaussianBlur stdDeviation="0.55"/></filter></defs><g clip-path="url(#ac2)"><rect width="16" height="16" fill="#6b6478"/><g filter="url(#af2)"><rect x="-1" y="-1" width="6.5" height="9" fill="#d9d0d2"/><rect x="1.6" y="1" width="1.6" height="6" fill="#8c86b0"/><rect x="4" y="1" width="1" height="5" fill="#9a92b8"/><ellipse cx="9" cy="3.4" rx="3.2" ry="2.4" fill="#d2a022"/><rect x="12.4" y="-1" width="4.6" height="7.5" fill="#241c2a"/><rect x="11.4" y="-0.5" width="2.6" height="2" fill="#e4d8a8"/><ellipse cx="9.4" cy="7.6" rx="4" ry="2.9" fill="#17111c"/><rect x="7.4" y="6.4" width="4.4" height="0.9" fill="#7a2c3c"/><rect x="7.6" y="8.4" width="3.6" height="0.8" fill="#5a2434"/><ellipse cx="2.6" cy="9.4" rx="2.8" ry="2" fill="#a07c2c"/><ellipse cx="6.4" cy="9.6" rx="2" ry="1.6" fill="#c4c0cc"/><rect x="-1" y="11.2" width="8" height="6" fill="#2b3e9c"/><ellipse cx="4" cy="12.2" rx="2.4" ry="1.1" fill="#c8a030"/><ellipse cx="11.4" cy="12" rx="2.6" ry="2.6" fill="#d8ac30"/><rect x="13.6" y="10.6" width="3" height="6" fill="#dcd2da"/><rect x="14.2" y="8" width="2.4" height="2.6" fill="#c49a34"/><rect x="5.6" y="14.4" width="6.4" height="2" fill="#4c2630"/><rect x="8.2" y="12.6" width="1.6" height="2.6" fill="#ece4da"/><rect x="0" y="15" width="5" height="1.4" fill="#3a2c6c"/></g><rect width="16" height="16" fill="#5c586c" opacity="0.28"/></g></svg>
<div class="t " style="left:1488.4px;top:132.05px;font-size:13.5px;line-height:17.5px;color:#f4f400;letter-spacing:0.392px;">leo</div>
<div class="t " style="left:1660px;top:132.05px;font-size:13.5px;line-height:17.5px;color:#f4f400;letter-spacing:0.547px;">0da46cb90b</div>
<div class="t " style="left:1772.5px;top:132.05px;font-size:13.5px;line-height:17.5px;color:#f4f400;letter-spacing:0.118px;">2024/11/19 02:52:52</div>
<div class="t " style="left:435px;top:160.05px;font-size:13.5px;line-height:17.5px;color:#f4f400;font-weight:bold;letter-spacing:-0.141px;">code_review:</div>
<div class="t " style="left:523.2px;top:160.05px;font-size:13.5px;line-height:17.5px;color:#f4f400;letter-spacing:-0.691px;">PR #711</div>
<svg style="left:1464px;top:160px;" width="16" height="16" viewBox="0 0 16 16"><defs><clipPath id="ac3"><rect width="16" height="16" rx="2"/></clipPath><filter id="af3" x="-10%" y="-10%" width="120%" height="120%"><feGaussianBlur stdDeviation="0.55"/></filter></defs><g clip-path="url(#ac3)"><rect width="16" height="16" fill="#6b6478"/><g filter="url(#af3)"><rect x="-1" y="-1" width="6.5" height="9" fill="#d9d0d2"/><rect x="1.6" y="1" width="1.6" height="6" fill="#8c86b0"/><rect x="4" y="1" width="1" height="5" fill="#9a92b8"/><ellipse cx="9" cy="3.4" rx="3.2" ry="2.4" fill="#d2a022"/><rect x="12.4" y="-1" width="4.6" height="7.5" fill="#241c2a"/><rect x="11.4" y="-0.5" width="2.6" height="2" fill="#e4d8a8"/><ellipse cx="9.4" cy="7.6" rx="4" ry="2.9" fill="#17111c"/><rect x="7.4" y="6.4" width="4.4" height="0.9" fill="#7a2c3c"/><rect x="7.6" y="8.4" width="3.6" height="0.8" fill="#5a2434"/><ellipse cx="2.6" cy="9.4" rx="2.8" ry="2" fill="#a07c2c"/><ellipse cx="6.4" cy="9.6" rx="2" ry="1.6" fill="#c4c0cc"/><rect x="-1" y="11.2" width="8" height="6" fill="#2b3e9c"/><ellipse cx="4" cy="12.2" rx="2.4" ry="1.1" fill="#c8a030"/><ellipse cx="11.4" cy="12" rx="2.6" ry="2.6" fill="#d8ac30"/><rect x="13.6" y="10.6" width="3" height="6" fill="#dcd2da"/><rect x="14.2" y="8" width="2.4" height="2.6" fill="#c49a34"/><rect x="5.6" y="14.4" width="6.4" height="2" fill="#4c2630"/><rect x="8.2" y="12.6" width="1.6" height="2.6" fill="#ece4da"/><rect x="0" y="15" width="5" height="1.4" fill="#3a2c6c"/></g><rect width="16" height="16" fill="#5c586c" opacity="0.28"/></g></svg>
<div class="t " style="left:1488.4px;top:160.05px;font-size:13.5px;line-height:17.5px;color:#f4f400;letter-spacing:0.392px;">leo</div>
<div class="t " style="left:1660px;top:160.05px;font-size:13.5px;line-height:17.5px;color:#f4f400;letter-spacing:0.351px;">8b3d129890</div>
<div class="t " style="left:1772.5px;top:160.05px;font-size:13.5px;line-height:17.5px;color:#f4f400;letter-spacing:0.201px;">2024/11/19 02:46:06</div>
<div class="t " style="left:435px;top:188.05px;font-size:13.5px;line-height:17.5px;color:#f4f400;font-weight:bold;letter-spacing:-0.197px;">enhance:</div>
<div class="t " style="left:497.1px;top:188.05px;font-size:13.5px;line-height:17.5px;color:#f4f400;letter-spacing:0.16px;">slightly improve statistics (#711)</div>
<svg style="left:1464px;top:188px;" width="16" height="16" viewBox="0 0 16 16"><rect width="16" height="16" rx="2" fill="#030303"/><rect x="1.8" y="0" width="12.2" height="13.3" fill="#fafafa"/><path d="M4.2 13.6 Q2.400 5.4 7.4 2.3 Q11.4 1.6 12.7 7.4" stroke="#0a0a0a" stroke-width="2.5" fill="none"/><path d="M5 7 Q6.6 4.600 8.4 3.600 L7 2.600 Q4.6 4.4 4.600 7.6 Z" fill="#0a0a0a"/><circle cx="9.7" cy="6.4" r="0.6" fill="#222"/><path d="M7.5 6.6 V9.6" stroke="#333" stroke-width="0.5"/><circle cx="7.6" cy="9.6" r="0.5" fill="#111"/><ellipse cx="7.8" cy="11.6" rx="0.9" ry="0.45" fill="#111"/><path d="M12.6 8.4 Q12.8 10.6 12 12" stroke="#222" stroke-width="0.8" fill="none"/><path d="M1.8 13.2 H14 V16 H1.8 Z" fill="#030303"/><path d="M5.8 16 L6.4 13.6 L8 13.2 L7.6 16 Z M8.6 16 L8.8 13.6 L10.4 14.4 L10 16 Z" fill="#f4f4f4"/><path d="M6.6 12.2 Q8.4 13.4 10.6 12.6 L11 13.6 H6.4 Z" fill="#fafafa"/></svg>
<div class="t " style="left:1488.4px;top:188.05px;font-size:13.5px;line-height:17.5px;color:#f4f400;letter-spacing:0.124px;">Dmitrij D. Czarkoff</div>
<div class="t " style="left:1660.5px;top:188.05px;font-size:13.5px;line-height:17.5px;color:#f4f400;letter-spacing:0.49px;">309db6e362</div>
<div class="t " style="left:1772.5px;top:188.05px;font-size:13.5px;line-height:17.5px;color:#f4f400;letter-spacing:0.16px;">2024/11/19 02:35:32</div>
<div class="t " style="left:435px;top:216.05px;font-size:13.5px;line-height:17.5px;color:#f4f400;font-weight:bold;letter-spacing:-0.825px;">ux:</div>
<div class="t " style="left:457.8px;top:216.05px;font-size:13.5px;line-height:17.5px;color:#f4f400;letter-spacing:0.327px;">better drop shadow effect for notifications</div>
<svg style="left:1464px;top:216px;" width="16" height="16" viewBox="0 0 16 16"><defs><clipPath id="ac5"><rect width="16" height="16" rx="2"/></clipPath><filter id="af5" x="-10%" y="-10%" width="120%" height="120%"><feGaussianBlur stdDeviation="0.55"/></filter></defs><g clip-path="url(#ac5)"><rect width="16" height="16" fill="#6b6478"/><g filter="url(#af5)"><rect x="-1" y="-1" width="6.5" height="9" fill="#d9d0d2"/><rect x="1.6" y="1" width="1.6" height="6" fill="#8c86b0"/><rect x="4" y="1" width="1" height="5" fill="#9a92b8"/><ellipse cx="9" cy="3.4" rx="3.2" ry="2.4" fill="#d2a022"/><rect x="12.4" y="-1" width="4.6" height="7.5" fill="#241c2a"/><rect x="11.4" y="-0.5" width="2.6" height="2" fill="#e4d8a8"/><ellipse cx="9.4" cy="7.6" rx="4" ry="2.9" fill="#17111c"/><rect x="7.4" y="6.4" width="4.4" height="0.9" fill="#7a2c3c"/><rect x="7.6" y="8.4" width="3.6" height="0.8" fill="#5a2434"/><ellipse cx="2.6" cy="9.4" rx="2.8" ry="2" fill="#a07c2c"/><ellipse cx="6.4" cy="9.6" rx="2" ry="1.6" fill="#c4c0cc"/><rect x="-1" y="11.2" width="8" height="6" fill="#2b3e9c"/><ellipse cx="4" cy="12.2" rx="2.4" ry="1.1" fill="#c8a030"/><ellipse cx="11.4" cy="12" rx="2.6" ry="2.6" fill="#d8ac30"/><rect x="13.6" y="10.6" width="3" height="6" fill="#dcd2da"/><rect x="14.2" y="8" width="2.4" height="2.6" fill="#c49a34"/><rect x="5.6" y="14.4" width="6.4" height="2" fill="#4c2630"/><rect x="8.2" y="12.6" width="1.6" height="2.6" fill="#ece4da"/><rect x="0" y="15" width="5" height="1.4" fill="#3a2c6c"/></g><rect width="16" height="16" fill="#5c586c" opacity="0.28"/></g></svg>
<div class="t " style="left:1488.4px;top:216.05px;font-size:13.5px;line-height:17.5px;color:#f4f400;letter-spacing:0.392px;">leo</div>
<div class="t " style="left:1660.5px;top:216.05px;font-size:13.5px;line-height:17.5px;color:#f4f400;letter-spacing:0.434px;">5b55e3530d</div>
<div class="t " style="left:1771.75px;top:216.05px;font-size:13.5px;line-height:17.5px;color:#f4f400;letter-spacing:0.188px;">2024/11/19 02:34:09</div>
<div class="t " style="left:435px;top:244.05px;font-size:13.5px;line-height:17.5px;color:#f4f400;font-weight:bold;letter-spacing:-0.141px;">code_review:</div>
<div class="t " style="left:523.2px;top:244.05px;font-size:13.5px;line-height:17.5px;color:#f4f400;letter-spacing:-0.508px;">PR #714</div>
<svg style="left:1464px;top:244px;" width="16" height="16" viewBox="0 0 16 16"><defs><clipPath id="ac6"><rect width="16" height="16" rx="2"/></clipPath><filter id="af6" x="-10%" y="-10%" width="120%" height="120%"><feGaussianBlur stdDeviation="0.55"/></filter></defs><g clip-path="url(#ac6)"><rect width="16" height="16" fill="#6b6478"/><g filter="url(#af6)"><rect x="-1" y="-1" width="6.5" height="9" fill="#d9d0d2"/><rect x="1.6" y="1" width="1.6" height="6" fill="#8c86b0"/><rect x="4" y="1" width="1" height="5" fill="#9a92b8"/><ellipse cx="9" cy="3.4" rx="3.2" ry="2.4" fill="#d2a022"/><rect x="12.4" y="-1" width="4.6" height="7.5" fill="#241c2a"/><rect x="11.4" y="-0.5" width="2.6" height="2" fill="#e4d8a8"/><ellipse cx="9.4" cy="7.6" rx="4" ry="2.9" fill="#17111c"/><rect x="7.4" y="6.4" width="4.4" height="0.9" fill="#7a2c3c"/><rect x="7.6" y="8.4" width="3.6" height="0.8" fill="#5a2434"/><ellipse cx="2.6" cy="9.4" rx="2.8" ry="2" fill="#a07c2c"/><ellipse cx="6.4" cy="9.6" rx="2" ry="1.6" fill="#c4c0cc"/><rect x="-1" y="11.2" width="8" height="6" fill="#2b3e9c"/><ellipse cx="4" cy="12.2" rx="2.4" ry="1.1" fill="#c8a030"/><ellipse cx="11.4" cy="12" rx="2.6" ry="2.6" fill="#d8ac30"/><rect x="13.6" y="10.6" width="3" height="6" fill="#dcd2da"/><rect x="14.2" y="8" width="2.4" height="2.6" fill="#c49a34"/><rect x="5.6" y="14.4" width="6.4" height="2" fill="#4c2630"/><rect x="8.2" y="12.6" width="1.6" height="2.6" fill="#ece4da"/><rect x="0" y="15" width="5" height="1.4" fill="#3a2c6c"/></g><rect width="16" height="16" fill="#5c586c" opacity="0.28"/></g></svg>
<div class="t " style="left:1488.4px;top:244.05px;font-size:13.5px;line-height:17.5px;color:#f4f400;letter-spacing:0.392px;">leo</div>
<div class="t " style="left:1662px;top:244.05px;font-size:13.5px;line-height:17.5px;color:#f4f400;letter-spacing:0.156px;">d07a664166</div>
<div class="t " style="left:1773.5px;top:244.05px;font-size:13.5px;line-height:17.5px;color:#f4f400;letter-spacing:-0.007px;">2024/11/19 02:27:31</div>
<div class="t " style="left:435px;top:272.05px;font-size:13.5px;line-height:17.5px;color:#f4f400;font-weight:bold;letter-spacing:-0.004px;">feat:</div>
<div class="t " style="left:467.7px;top:272.05px;font-size:13.5px;line-height:17.5px;color:#f4f400;letter-spacing:0.064px;">Reset Mode Hotkey (#714)</div>
<svg style="left:1464px;top:272px;" width="16" height="16" viewBox="0 0 16 16"><rect width="16" height="16" rx="2" fill="#020202"/><path d="M13.2 1.9 Q12.6 4.7 10.4 4.7 H8.4 A3.4 3.4 0 0 0 8.4 11.5 H10.4 Q12.600 11.5 13.2 14.3 H8 A6.2 6.200 0 0 1 8 1.9 Z" fill="#fff"/><circle cx="8.1" cy="8.1" r="1.75" fill="#fff"/></svg>
<div class="t " style="left:1488.4px;top:272.05px;font-size:13.5px;line-height:17.5px;color:#f4f400;letter-spacing:-0.125px;">Enner Pérez</div>
<div class="t " style="left:1662px;top:272.05px;font-size:13.5px;line-height:17.5px;color:#f4f400;letter-spacing:0.045px;">ea1d966d27</div>
<div class="t " style="left:1772.5px;top:272.05px;font-size:13.5px;line-height:17.5px;color:#f4f400;letter-spacing:0.062px;">2024/11/19 02:14:53</div>
<div class="t " style="left:435px;top:300.05px;font-size:13.5px;line-height:17.5px;color:#f4f400;font-weight:bold;letter-spacing:-0.031px;">feature:</div>
<div class="t " style="left:488.5px;top:300.05px;font-size:13.5px;line-height:17.5px;color:#f4f400;letter-spacing:0.214px;">switch WinMerge from 3-way to 2-way UI (#712)</div>
<svg style="left:1464px;top:300px;" width="16" height="16" viewBox="0 0 16 16"><rect width="16" height="16" rx="2" fill="#030303"/><rect x="1.8" y="0" width="12.2" height="13.3" fill="#fafafa"/><path d="M4.2 13.6 Q2.400 5.4 7.4 2.3 Q11.4 1.6 12.7 7.4" stroke="#0a0a0a" stroke-width="2.5" fill="none"/><path d="M5 7 Q6.6 4.600 8.4 3.600 L7 2.600 Q4.6 4.4 4.600 7.6 Z" fill="#0a0a0a"/><circle cx="9.7" cy="6.4" r="0.6" fill="#222"/><path d="M7.5 6.6 V9.6" stroke="#333" stroke-width="0.5"/><circle cx="7.6" cy="9.6" r="0.5" fill="#111"/><ellipse cx="7.8" cy="11.6" rx="0.9" ry="0.45" fill="#111"/><path d="M12.6 8.4 Q12.8 10.6 12 12" stroke="#222" stroke-width="0.8" fill="none"/><path d="M1.8 13.2 H14 V16 H1.8 Z" fill="#030303"/><path d="M5.8 16 L6.4 13.6 L8 13.2 L7.6 16 Z M8.6 16 L8.8 13.6 L10.4 14.4 L10 16 Z" fill="#f4f4f4"/><path d="M6.6 12.2 Q8.4 13.4 10.6 12.6 L11 13.6 H6.4 Z" fill="#fafafa"/></svg>
<div class="t " style="left:1488.4px;top:300.05px;font-size:13.5px;line-height:17.5px;color:#f4f400;letter-spacing:0.124px;">Dmitrij D. Czarkoff</div>
<div class="t " style="left:1665px;top:300.05px;font-size:13.5px;line-height:17.5px;color:#f4f400;letter-spacing:0.214px;">f4618afee6</div>
<div class="t " style="left:1772.5px;top:300.05px;font-size:13.5px;line-height:17.5px;color:#f4f400;letter-spacing:0.118px;">2024/11/18 02:03:27</div>
<div class="t " style="left:435px;top:328.05px;font-size:13.5px;line-height:17.5px;color:#f4f400;font-weight:bold;letter-spacing:-0.031px;">feature:</div>
<div class="t " style="left:488.5px;top:328.05px;font-size:13.5px;line-height:17.5px;color:#f4f400;letter-spacing:0.241px;">add change minimap for text diff view</div>
<svg style="left:1464px;top:328px;" width="16" height="16" viewBox="0 0 16 16"><defs><clipPath id="ac9"><rect width="16" height="16" rx="2"/></clipPath><filter id="af9" x="-10%" y="-10%" width="120%" height="120%"><feGaussianBlur stdDeviation="0.55"/></filter></defs><g clip-path="url(#ac9)"><rect width="16" height="16" fill="#6b6478"/><g filter="url(#af9)"><rect x="-1" y="-1" width="6.5" height="9" fill="#d9d0d2"/><rect x="1.6" y="1" width="1.6" height="6" fill="#8c86b0"/><rect x="4" y="1" width="1" height="5" fill="#9a92b8"/><ellipse cx="9" cy="3.4" rx="3.2" ry="2.4" fill="#d2a022"/><rect x="12.4" y="-1" width="4.6" height="7.5" fill="#241c2a"/><rect x="11.4" y="-0.5" width="2.6" height="2" fill="#e4d8a8"/><ellipse cx="9.4" cy="7.6" rx="4" ry="2.9" fill="#17111c"/><rect x="7.4" y="6.4" width="4.4" height="0.9" fill="#7a2c3c"/><rect x="7.6" y="8.4" width="3.6" height="0.8" fill="#5a2434"/><ellipse cx="2.6" cy="9.4" rx="2.8" ry="2" fill="#a07c2c"/><ellipse cx="6.4" cy="9.6" rx="2" ry="1.6" fill="#c4c0cc"/><rect x="-1" y="11.2" width="8" height="6" fill="#2b3e9c"/><ellipse cx="4" cy="12.2" rx="2.4" ry="1.1" fill="#c8a030"/><ellipse cx="11.4" cy="12" rx="2.6" ry="2.6" fill="#d8ac30"/><rect x="13.6" y="10.6" width="3" height="6" fill="#dcd2da"/><rect x="14.2" y="8" width="2.4" height="2.6" fill="#c49a34"/><rect x="5.6" y="14.4" width="6.4" height="2" fill="#4c2630"/><rect x="8.2" y="12.6" width="1.6" height="2.6" fill="#ece4da"/><rect x="0" y="15" width="5" height="1.4" fill="#3a2c6c"/></g><rect width="16" height="16" fill="#5c586c" opacity="0.28"/></g></svg>
<div class="t " style="left:1488.4px;top:328.05px;font-size:13.5px;line-height:17.5px;color:#f4f400;letter-spacing:0.392px;">leo</div>
<div class="t " style="left:1662.5px;top:328.05px;font-size:13.5px;line-height:17.5px;color:#f4f400;letter-spacing:0.464px;">3b09ea45f5</div>
<div class="t " style="left:1772.5px;top:328.05px;font-size:13.5px;line-height:17.5px;color:#f4f400;letter-spacing:0.076px;">2024/11/17 14:49:33</div>
<div class="t " style="left:435px;top:356.05px;font-size:13.5px;line-height:17.5px;color:#f4f400;font-weight:bold;letter-spacing:-0.433px;">doc:</div>
<div class="t " style="left:466.4px;top:356.05px;font-size:13.5px;line-height:17.5px;color:#f4f400;letter-spacing:0.17px;">Update translation status and missing keys</div>
<svg style="left:1464px;top:356px;" width="16" height="16" viewBox="0 0 16 16"><rect width="16" height="16" rx="2" fill="#f0f0f0"/><rect x="6.66" y="1.30" width="2.73" height="2.73" fill="#7ccf62"/><rect x="3.98" y="3.98" width="2.73" height="2.73" fill="#7ccf62"/><rect x="9.34" y="3.98" width="2.73" height="2.73" fill="#7ccf62"/><rect x="1.30" y="6.66" width="2.73" height="2.73" fill="#7ccf62"/><rect x="12.02" y="6.66" width="2.73" height="2.73" fill="#7ccf62"/><rect x="1.30" y="9.34" width="2.73" height="2.73" fill="#7ccf62"/><rect x="3.98" y="9.34" width="2.73" height="2.73" fill="#7ccf62"/><rect x="6.66" y="9.34" width="2.73" height="2.73" fill="#7ccf62"/><rect x="9.34" y="9.34" width="2.73" height="2.73" fill="#7ccf62"/><rect x="12.02" y="9.34" width="2.73" height="2.73" fill="#7ccf62"/><rect x="6.66" y="12.02" width="2.73" height="2.73" fill="#7ccf62"/><rect x="3.98" y="7.16" width="8.04" height="1.3" fill="#fff"/><rect x="6.66" y="3.98" width="2.68" height="3.18" fill="#f8f8f8"/></svg>
<div class="t " style="left:1488.4px;top:356.05px;font-size:13.5px;line-height:17.5px;color:#f4f400;letter-spacing:0.482px;">github-actions[bot]</div>
<div class="t " style="left:1662px;top:356.05px;font-size:13.5px;line-height:17.5px;color:#f4f400;letter-spacing:0.325px;">b7abf2ee50</div>
<div class="t " style="left:1772.5px;top:356.05px;font-size:13.5px;line-height:17.5px;color:#f4f400;letter-spacing:0.076px;">2024/11/17 04:16:44</div>
<div class="t " style="left:435px;top:384.05px;font-size:13.5px;line-height:17.5px;color:#f4f400;letter-spacing:0.045px;">Add and improve de_DE keys (#709)</div>
<svg style="left:1464px;top:384px;" width="16" height="16" viewBox="0 0 16 16"><defs><linearGradient id="nrg11" x1="0" y1="0" x2="0" y2="1"><stop offset="0" stop-color="#ffa514"/><stop offset="1" stop-color="#ffd894"/></linearGradient></defs><rect width="16" height="16" rx="2" fill="url(#nrg11)"/><text x="1.9" y="12" font-family="Liberation Sans, sans-serif" font-size="11.4" font-weight="bold" fill="#fff" textLength="11.6" lengthAdjust="spacingAndGlyphs">NR</text></svg>
<div class="t " style="left:1488.4px;top:384.05px;font-size:13.5px;line-height:17.5px;color:#f4f400;letter-spacing:-0.019px;">Nils van Rijsinge</div>
<div class="t " style="left:1664.25px;top:384.05px;font-size:13.5px;line-height:17.5px;color:#f4f400;letter-spacing:0.632px;">6f256f6f5b</div>
<div class="t " style="left:1774.5px;top:384.05px;font-size:13.5px;line-height:17.5px;color:#f4f400;letter-spacing:-0.062px;">2024/11/17 04:16:31</div>
<div class="t " style="left:435px;top:412.05px;font-size:13.5px;line-height:17.5px;color:#f4f400;font-weight:bold;letter-spacing:-0.55px;">fix:</div>
<div class="t " style="left:457.8px;top:412.05px;font-size:13.5px;line-height:17.5px;color:#f4f400;letter-spacing:0.237px;">in commit view get file histories by commit (#708)</div>
<svg style="left:1464px;top:412px;" width="16" height="16" viewBox="0 0 16 16"><rect width="16" height="16" rx="2" fill="#030303"/><rect x="1.8" y="0" width="12.2" height="13.3" fill="#fafafa"/><path d="M4.2 13.6 Q2.400 5.4 7.4 2.3 Q11.4 1.6 12.7 7.4" stroke="#0a0a0a" stroke-width="2.5" fill="none"/><path d="M5 7 Q6.6 4.600 8.4 3.600 L7 2.600 Q4.6 4.4 4.600 7.6 Z" fill="#0a0a0a"/><circle cx="9.7" cy="6.4" r="0.6" fill="#222"/><path d="M7.5 6.6 V9.6" stroke="#333" stroke-width="0.5"/><circle cx="7.6" cy="9.6" r="0.5" fill="#111"/><ellipse cx="7.8" cy="11.6" rx="0.9" ry="0.45" fill="#111"/><path d="M12.6 8.4 Q12.8 10.6 12 12" stroke="#222" stroke-width="0.8" fill="none"/><path d="M1.8 13.2 H14 V16 H1.8 Z" fill="#030303"/><path d="M5.8 16 L6.4 13.6 L8 13.2 L7.6 16 Z M8.6 16 L8.8 13.6 L10.4 14.4 L10 16 Z" fill="#f4f4f4"/><path d="M6.6 12.2 Q8.4 13.4 10.6 12.6 L11 13.6 H6.4 Z" fill="#fafafa"/></svg>
<div class="t " style="left:1488.4px;top:412.05px;font-size:13.5px;line-height:17.5px;color:#f4f400;letter-spacing:0.124px;">Dmitrij D. Czarkoff</div>
<div class="t " style="left:1662px;top:412.05px;font-size:13.5px;line-height:17.5px;color:#f4f400;letter-spacing:0.464px;">5301645f8b</div>
<div class="t " style="left:1772.5px;top:412.05px;font-size:13.5px;line-height:17.5px;color:#f4f400;letter-spacing:0.062px;">2024/11/17 04:14:56</div>
<div class="t " style="left:435px;top:440.05px;font-size:13.5px;line-height:17.5px;color:#f4f400;font-weight:bold;letter-spacing:-0.096px;">refactor:</div>
<div class="t " style="left:493.2px;top:440.05px;font-size:13.5px;line-height:17.5px;color:#f4f400;letter-spacing:0.304px;">text diff view go to next/prev change</div>
<svg style="left:1464px;top:440px;" width="16" height="16" viewBox="0 0 16 16"><defs><clipPath id="ac13"><rect width="16" height="16" rx="2"/></clipPath><filter id="af13" x="-10%" y="-10%" width="120%" height="120%"><feGaussianBlur stdDeviation="0.55"/></filter></defs><g clip-path="url(#ac13)"><rect width="16" height="16" fill="#6b6478"/><g filter="url(#af13)"><rect x="-1" y="-1" width="6.5" height="9" fill="#d9d0d2"/><rect x="1.6" y="1" width="1.6" height="6" fill="#8c86b0"/><rect x="4" y="1" width="1" height="5" fill="#9a92b8"/><ellipse cx="9" cy="3.4" rx="3.2" ry="2.4" fill="#d2a022"/><rect x="12.4" y="-1" width="4.6" height="7.5" fill="#241c2a"/><rect x="11.4" y="-0.5" width="2.6" height="2" fill="#e4d8a8"/><ellipse cx="9.4" cy="7.6" rx="4" ry="2.9" fill="#17111c"/><rect x="7.4" y="6.4" width="4.4" height="0.9" fill="#7a2c3c"/><rect x="7.6" y="8.4" width="3.6" height="0.8" fill="#5a2434"/><ellipse cx="2.6" cy="9.4" rx="2.8" ry="2" fill="#a07c2c"/><ellipse cx="6.4" cy="9.6" rx="2" ry="1.6" fill="#c4c0cc"/><rect x="-1" y="11.2" width="8" height="6" fill="#2b3e9c"/><ellipse cx="4" cy="12.2" rx="2.4" ry="1.1" fill="#c8a030"/><ellipse cx="11.4" cy="12" rx="2.6" ry="2.6" fill="#d8ac30"/><rect x="13.6" y="10.6" width="3" height="6" fill="#dcd2da"/><rect x="14.2" y="8" width="2.4" height="2.6" fill="#c49a34"/><rect x="5.6" y="14.4" width="6.4" height="2" fill="#4c2630"/><rect x="8.2" y="12.6" width="1.6" height="2.6" fill="#ece4da"/><rect x="0" y="15" width="5" height="1.4" fill="#3a2c6c"/></g><rect width="16" height="16" fill="#5c586c" opacity="0.28"/></g></svg>
<div class="t " style="left:1488.4px;top:440.05px;font-size:13.5px;line-height:17.5px;color:#f4f400;letter-spacing:0.392px;">leo</div>
<div class="t " style="left:1660px;top:440.05px;font-size:13.5px;line-height:17.5px;color:#f4f400;letter-spacing:0.351px;">882878dbe5</div>
<div class="t " style="left:1774.5px;top:440.05px;font-size:13.5px;line-height:17.5px;color:#f4f400;letter-spacing:-0.021px;">2024/11/16 11:24:37</div>
<div class="t " style="left:435px;top:468.05px;font-size:13.5px;line-height:17.5px;color:#f4f400;font-weight:bold;letter-spacing:-0.217px;">project:</div>
<div class="t " style="left:487.2px;top:468.05px;font-size:13.5px;line-height:17.5px;color:#f4f400;letter-spacing:0.206px;">upgrade to .NET 9 (#694)</div>
<svg style="left:1464px;top:468px;" width="16" height="16" viewBox="0 0 16 16"><defs><clipPath id="ac14"><rect width="16" height="16" rx="2"/></clipPath><filter id="af14" x="-10%" y="-10%" width="120%" height="120%"><feGaussianBlur stdDeviation="0.55"/></filter></defs><g clip-path="url(#ac14)"><rect width="16" height="16" fill="#6b6478"/><g filter="url(#af14)"><rect x="-1" y="-1" width="6.5" height="9" fill="#d9d0d2"/><rect x="1.6" y="1" width="1.6" height="6" fill="#8c86b0"/><rect x="4" y="1" width="1" height="5" fill="#9a92b8"/><ellipse cx="9" cy="3.4" rx="3.2" ry="2.4" fill="#d2a022"/><rect x="12.4" y="-1" width="4.6" height="7.5" fill="#241c2a"/><rect x="11.4" y="-0.5" width="2.6" height="2" fill="#e4d8a8"/><ellipse cx="9.4" cy="7.6" rx="4" ry="2.9" fill="#17111c"/><rect x="7.4" y="6.4" width="4.4" height="0.9" fill="#7a2c3c"/><rect x="7.6" y="8.4" width="3.6" height="0.8" fill="#5a2434"/><ellipse cx="2.6" cy="9.4" rx="2.8" ry="2" fill="#a07c2c"/><ellipse cx="6.4" cy="9.6" rx="2" ry="1.6" fill="#c4c0cc"/><rect x="-1" y="11.2" width="8" height="6" fill="#2b3e9c"/><ellipse cx="4" cy="12.2" rx="2.4" ry="1.1" fill="#c8a030"/><ellipse cx="11.4" cy="12" rx="2.6" ry="2.6" fill="#d8ac30"/><rect x="13.6" y="10.6" width="3" height="6" fill="#dcd2da"/><rect x="14.2" y="8" width="2.4" height="2.6" fill="#c49a34"/><rect x="5.6" y="14.4" width="6.4" height="2" fill="#4c2630"/><rect x="8.2" y="12.6" width="1.6" height="2.6" fill="#ece4da"/><rect x="0" y="15" width="5" height="1.4" fill="#3a2c6c"/></g><rect width="16" height="16" fill="#5c586c" opacity="0.28"/></g></svg>
<div class="t " style="left:1488.4px;top:468.05px;font-size:13.5px;line-height:17.5px;color:#f4f400;letter-spacing:0.392px;">leo</div>
<div class="t " style="left:1660px;top:468.05px;font-size:13.5px;line-height:17.5px;color:#f4f400;letter-spacing:0.408px;">52c7388a38</div>
<div class="t " style="left:1771.5px;top:468.05px;font-size:13.5px;line-height:17.5px;color:#f4f400;letter-spacing:0.201px;">2024/11/16 09:06:30</div>
<div class="t " style="left:435px;top:496.05px;font-size:13.5px;line-height:17.5px;color:#f4f400;font-weight:bold;letter-spacing:-0.031px;">feature:</div>
<div class="t " style="left:488.5px;top:496.05px;font-size:13.5px;line-height:17.5px;color:#f4f400;letter-spacing:0.253px;">add buttons to go to prev/next change in text diff view (#616)</div>
<svg style="left:1464px;top:496px;" width="16" height="16" viewBox="0 0 16 16"><defs><clipPath id="ac15"><rect width="16" height="16" rx="2"/></clipPath><filter id="af15" x="-10%" y="-10%" width="120%" height="120%"><feGaussianBlur stdDeviation="0.55"/></filter></defs><g clip-path="url(#ac15)"><rect width="16" height="16" fill="#6b6478"/><g filter="url(#af15)"><rect x="-1" y="-1" width="6.5" height="9" fill="#d9d0d2"/><rect x="1.6" y="1" width="1.6" height="6" fill="#8c86b0"/><rect x="4" y="1" width="1" height="5" fill="#9a92b8"/><ellipse cx="9" cy="3.4" rx="3.2" ry="2.4" fill="#d2a022"/><rect x="12.4" y="-1" width="4.6" height="7.5" fill="#241c2a"/><rect x="11.4" y="-0.5" width="2.6" height="2" fill="#e4d8a8"/><ellipse cx="9.4" cy="7.6" rx="4" ry="2.9" fill="#17111c"/><rect x="7.4" y="6.4" width="4.4" height="0.9" fill="#7a2c3c"/><rect x="7.6" y="8.4" width="3.6" height="0.8" fill="#5a2434"/><ellipse cx="2.6" cy="9.4" rx="2.8" ry="2" fill="#a07c2c"/><ellipse cx="6.4" cy="9.6" rx="2" ry="1.6" fill="#c4c0cc"/><rect x="-1" y="11.2" width="8" height="6" fill="#2b3e9c"/><ellipse cx="4" cy="12.2" rx="2.4" ry="1.1" fill="#c8a030"/><ellipse cx="11.4" cy="12" rx="2.6" ry="2.6" fill="#d8ac30"/><rect x="13.6" y="10.6" width="3" height="6" fill="#dcd2da"/><rect x="14.2" y="8" width="2.4" height="2.6" fill="#c49a34"/><rect x="5.6" y="14.4" width="6.4" height="2" fill="#4c2630"/><rect x="8.2" y="12.6" width="1.6" height="2.6" fill="#ece4da"/><rect x="0" y="15" width="5" height="1.4" fill="#3a2c6c"/></g><rect width="16" height="16" fill="#5c586c" opacity="0.28"/></g></svg>
<div class="t " style="left:1488.4px;top:496.05px;font-size:13.5px;line-height:17.5px;color:#f4f400;letter-spacing:0.392px;">leo</div>
<div class="t " style="left:1662px;top:496.05px;font-size:13.5px;line-height:17.5px;color:#f4f400;letter-spacing:0.13px;">134c71064e</div>
<div class="t " style="left:1773.5px;top:496.05px;font-size:13.5px;line-height:17.5px;color:#f4f400;letter-spacing:0.007px;">2024/11/16 08:17:29</div>
<div class="t " style="left:435px;top:524.05px;font-size:13.5px;line-height:17.5px;color:#f4f400;font-weight:bold;letter-spacing:-0.031px;">feature:</div>
<div class="t " style="left:488.5px;top:524.05px;font-size:13.5px;line-height:17.5px;color:#f4f400;letter-spacing:0.552px;">enable &#96;--no-ext-diff&#96; for &#96;git diff&#96; command</div>
<svg style="left:1464px;top:524px;" width="16" height="16" viewBox="0 0 16 16"><defs><clipPath id="ac16"><rect width="16" height="16" rx="2"/></clipPath><filter id="af16" x="-10%" y="-10%" width="120%" height="120%"><feGaussianBlur stdDeviation="0.55"/></filter></defs><g clip-path="url(#ac16)"><rect width="16" height="16" fill="#6b6478"/><g filter="url(#af16)"><rect x="-1" y="-1" width="6.5" height="9" fill="#d9d0d2"/><rect x="1.6" y="1" width="1.6" height="6" fill="#8c86b0"/><rect x="4" y="1" width="1" height="5" fill="#9a92b8"/><ellipse cx="9" cy="3.4" rx="3.2" ry="2.4" fill="#d2a022"/><rect x="12.4" y="-1" width="4.6" height="7.5" fill="#241c2a"/><rect x="11.4" y="-0.5" width="2.6" height="2" fill="#e4d8a8"/><ellipse cx="9.4" cy="7.6" rx="4" ry="2.9" fill="#17111c"/><rect x="7.4" y="6.4" width="4.4" height="0.9" fill="#7a2c3c"/><rect x="7.6" y="8.4" width="3.6" height="0.8" fill="#5a2434"/><ellipse cx="2.6" cy="9.4" rx="2.8" ry="2" fill="#a07c2c"/><ellipse cx="6.4" cy="9.6" rx="2" ry="1.6" fill="#c4c0cc"/><rect x="-1" y="11.2" width="8" height="6" fill="#2b3e9c"/><ellipse cx="4" cy="12.2" rx="2.4" ry="1.1" fill="#c8a030"/><ellipse cx="11.4" cy="12" rx="2.6" ry="2.6" fill="#d8ac30"/><rect x="13.6" y="10.6" width="3" height="6" fill="#dcd2da"/><rect x="14.2" y="8" width="2.4" height="2.6" fill="#c49a34"/><rect x="5.6" y="14.4" width="6.4" height="2" fill="#4c2630"/><rect x="8.2" y="12.6" width="1.6" height="2.6" fill="#ece4da"/><rect x="0" y="15" width="5" height="1.4" fill="#3a2c6c"/></g><rect width="16" height="16" fill="#5c586c" opacity="0.28"/></g></svg>
<div class="t " style="left:1488.4px;top:524.05px;font-size:13.5px;line-height:17.5px;color:#f4f400;letter-spacing:0.392px;">leo</div>
<div class="t " style="left:1662px;top:524.05px;font-size:13.5px;line-height:17.5px;color:#f4f400;letter-spacing:0.158px;">cd137e222c</div>
<div class="t " style="left:1772.5px;top:524.05px;font-size:13.5px;line-height:17.5px;color:#f4f400;letter-spacing:0.062px;">2024/11/16 02:26:13</div>
<!-- detail -->
<div class="t " style="left:413px;top:554.0px;font-size:14px;line-height:18px;color:rgba(240,240,0,0.6);font-weight:bold;letter-spacing:0.127px;">INFORMATION</div>
<div class="t " style="left:533.3px;top:554.0px;font-size:14px;line-height:18px;color:#32d2f0;font-weight:bold;letter-spacing:0.047px;">CHANGES</div>
<div class="abs " style="left:533px;top:570.6px;width:71px;height:1.3px;background:#32d2f0"></div>
<div class="t " style="left:624px;top:554.0px;font-size:14px;line-height:18px;color:rgba(240,240,0,0.6);font-weight:bold;letter-spacing:-0.368px;">FILES</div>
<div class="abs " style="left:407px;top:580px;width:458px;height:26px;border:1px solid #94653a;border-radius:4px;background:#131313"></div>
<svg style="left:412px;top:586.4px;" width="14" height="14" viewBox="0 0 14 14"><circle cx="5.2" cy="5.2" r="4.4" fill="none" stroke="#ff1744" stroke-width="1.2"/><path d="M8.4 8.4 L13 13" stroke="#ff1744" stroke-width="1.4"/></svg>
<div class="t " style="left:430px;top:584.65px;font-size:13.5px;line-height:17.5px;color:rgba(240,240,0,0.6);letter-spacing:-0.027px;">Search Changes...</div>
<svg style="left:871px;top:587px;" width="15" height="12" viewBox="0 0 15 12"><path d="M1.4 0 V11 H4.6 M1.4 5.6 H4.6" fill="none" stroke="#d4d000" stroke-width="1.4"/><circle cx="1.4" cy="1.3" r="1.4" fill="#d4d000"/><path d="M5.8 1 H14.4 M5.8 5.8 H14.4 M5.8 11 H14.4" stroke="#d4d000" stroke-width="1.6"/></svg>
<div class="abs " style="left:407px;top:610px;width:480px;height:409px;border:1px solid #94653a;background:#0d333b"></div>
<div class="abs " style="left:408px;top:831px;width:478px;height:24px;background:#27a0b4"></div>
<div class="abs " style="left:882.6px;top:713px;width:2.4px;height:72px;background:#6f7f86;border-radius:1px"></div>
<svg style="left:456px;top:620px;" width="14" height="14" viewBox="0 0 14 14"><defs><linearGradient id="fg0" x1="0" y1="0" x2="0" y2="1"><stop offset="0" stop-color="#f0a01c"/><stop offset="1" stop-color="#eaaa44"/></linearGradient></defs><rect width="14" height="14" rx="2" fill="url(#fg0)"/><rect x="6.4" y="5.5" width="1.2" height="3.6" fill="#fff"/><rect x="4.3" y="6.8" width="5.4" height="1.1" fill="#fff"/><rect x="4.3" y="9.8" width="5.4" height="1.1" fill="#fff"/></svg>
<div class="t " style="left:476.6px;top:618.85px;font-size:13.5px;line-height:17.5px;color:#f2f200;letter-spacing:0.012px;">Fetch.cs</div>
<svg style="left:456px;top:644px;" width="14" height="14" viewBox="0 0 14 14"><defs><linearGradient id="fg1" x1="0" y1="0" x2="0" y2="1"><stop offset="0" stop-color="#f0a01c"/><stop offset="1" stop-color="#eaaa44"/></linearGradient></defs><rect width="14" height="14" rx="2" fill="url(#fg1)"/><rect x="6.4" y="5.5" width="1.2" height="3.6" fill="#fff"/><rect x="4.3" y="6.8" width="5.4" height="1.1" fill="#fff"/><rect x="4.3" y="9.8" width="5.4" height="1.1" fill="#fff"/></svg>
<div class="t " style="left:476.6px;top:642.85px;font-size:13.5px;line-height:17.5px;color:#f2f200;letter-spacing:-0.041px;">Remote.cs</div>
<svg style="left:456px;top:668px;" width="14" height="14" viewBox="0 0 14 14"><defs><linearGradient id="fg2" x1="0" y1="0" x2="0" y2="1"><stop offset="0" stop-color="#f0a01c"/><stop offset="1" stop-color="#eaaa44"/></linearGradient></defs><rect width="14" height="14" rx="2" fill="url(#fg2)"/><rect x="6.4" y="5.5" width="1.2" height="3.6" fill="#fff"/><rect x="4.3" y="6.8" width="5.4" height="1.1" fill="#fff"/><rect x="4.3" y="9.8" width="5.4" height="1.1" fill="#fff"/></svg>
<div class="t " style="left:476.6px;top:666.85px;font-size:13.5px;line-height:17.5px;color:#f2f200;letter-spacing:0.211px;">Statistics.cs</div>
<svg style="left:428px;top:696px;" width="9" height="6" viewBox="0 0 9 6"><path d="M0 0 H8.8 L4.4 5.4 Z" fill="#f0f000"/></svg>
<svg style="left:440px;top:692.8px;" width="15" height="12" viewBox="0 0 15 12"><path d="M0.6 11.2 V1.4 Q0.6 0.6 1.4 0.6 H4.6 L6 2.2 H11.4 Q12.2 2.2 12.2 3 V4.4" fill="none" stroke="#d0a010" stroke-width="1.1"/><path d="M0.7 11.3 L2.6 4.5 H14.2 L12.2 11.3 Z" fill="none" stroke="#d0a010" stroke-width="1.1"/></svg>
<div class="t " style="left:460.5px;top:690.85px;font-size:13.5px;line-height:17.5px;color:#f2f200;letter-spacing:0.152px;">Converters</div>
<svg style="left:456px;top:716px;" width="14" height="14" viewBox="0 0 14 14"><defs><linearGradient id="fg4" x1="0" y1="0" x2="0" y2="1"><stop offset="0" stop-color="#36b43a"/><stop offset="1" stop-color="#56c44c"/></linearGradient></defs><rect width="14" height="14" rx="2" fill="url(#fg4)"/><rect x="6.4" y="4.6" width="1.2" height="5.4" fill="#fff"/><rect x="4.3" y="6.8" width="5.4" height="1.1" fill="#fff"/></svg>
<div class="t " style="left:476.6px;top:714.85px;font-size:13.5px;line-height:17.5px;color:#f2f200;letter-spacing:0.207px;">FilterModeConverters.cs</div>
<svg style="left:428px;top:744px;" width="9" height="6" viewBox="0 0 9 6"><path d="M0 0 H8.8 L4.4 5.4 Z" fill="#f0f000"/></svg>
<svg style="left:440px;top:740.8px;" width="15" height="12" viewBox="0 0 15 12"><path d="M0.6 11.2 V1.4 Q0.6 0.6 1.4 0.6 H4.6 L6 2.2 H11.4 Q12.2 2.2 12.2 3 V4.4" fill="none" stroke="#d0a010" stroke-width="1.1"/><path d="M0.7 11.3 L2.6 4.5 H14.2 L12.2 11.3 Z" fill="none" stroke="#d0a010" stroke-width="1.1"/></svg>
<div class="t " style="left:460.5px;top:738.85px;font-size:13.5px;line-height:17.5px;color:#f2f200;letter-spacing:0.194px;">Models</div>
<svg style="left:456px;top:764px;" width="14" height="14" viewBox="0 0 14 14"><defs><linearGradient id="fg6" x1="0" y1="0" x2="0" y2="1"><stop offset="0" stop-color="#f0a01c"/><stop offset="1" stop-color="#eaaa44"/></linearGradient></defs><rect width="14" height="14" rx="2" fill="url(#fg6)"/><rect x="6.4" y="5.5" width="1.2" height="3.6" fill="#fff"/><rect x="4.3" y="6.8" width="5.4" height="1.1" fill="#fff"/><rect x="4.3" y="9.8" width="5.4" height="1.1" fill="#fff"/></svg>
<div class="t " style="left:476.6px;top:762.85px;font-size:13.5px;line-height:17.5px;color:#f2f200;letter-spacing:0.1px;">ExternalMerger.cs</div>
<svg style="left:456px;top:788px;" width="14" height="14" viewBox="0 0 14 14"><defs><linearGradient id="fg7" x1="0" y1="0" x2="0" y2="1"><stop offset="0" stop-color="#36b43a"/><stop offset="1" stop-color="#56c44c"/></linearGradient></defs><rect width="14" height="14" rx="2" fill="url(#fg7)"/><rect x="6.4" y="4.6" width="1.2" height="5.4" fill="#fff"/><rect x="4.3" y="6.8" width="5.4" height="1.1" fill="#fff"/></svg>
<div class="t " style="left:476.6px;top:786.85px;font-size:13.5px;line-height:17.5px;color:#f2f200;letter-spacing:0.111px;">Filter.cs</div>
<svg style="left:456px;top:812px;" width="14" height="14" viewBox="0 0 14 14"><defs><linearGradient id="fg8" x1="0" y1="0" x2="0" y2="1"><stop offset="0" stop-color="#f0a01c"/><stop offset="1" stop-color="#eaaa44"/></linearGradient></defs><rect width="14" height="14" rx="2" fill="url(#fg8)"/><rect x="6.4" y="5.5" width="1.2" height="3.6" fill="#fff"/><rect x="4.3" y="6.8" width="5.4" height="1.1" fill="#fff"/><rect x="4.3" y="9.8" width="5.4" height="1.1" fill="#fff"/></svg>
<div class="t " style="left:476.6px;top:810.85px;font-size:13.5px;line-height:17.5px;color:#f2f200;letter-spacing:-0.066px;">OpenAI.cs</div>
<svg style="left:456px;top:836px;" width="14" height="14" viewBox="0 0 14 14"><defs><linearGradient id="fg9" x1="0" y1="0" x2="0" y2="1"><stop offset="0" stop-color="#f0a01c"/><stop offset="1" stop-color="#eaaa44"/></linearGradient></defs><rect width="14" height="14" rx="2" fill="url(#fg9)"/><rect x="6.4" y="5.5" width="1.2" height="3.6" fill="#fff"/><rect x="4.3" y="6.8" width="5.4" height="1.1" fill="#fff"/><rect x="4.3" y="9.8" width="5.4" height="1.1" fill="#fff"/></svg>
<div class="t " style="left:476.6px;top:834.85px;font-size:13.5px;line-height:17.5px;color:#f2f200;letter-spacing:0.177px;">RepositorySettings.cs</div>
<svg style="left:456px;top:860px;" width="14" height="14" viewBox="0 0 14 14"><defs><linearGradient id="fg10" x1="0" y1="0" x2="0" y2="1"><stop offset="0" stop-color="#f0a01c"/><stop offset="1" stop-color="#eaaa44"/></linearGradient></defs><rect width="14" height="14" rx="2" fill="url(#fg10)"/><rect x="6.4" y="5.5" width="1.2" height="3.6" fill="#fff"/><rect x="4.3" y="6.8" width="5.4" height="1.1" fill="#fff"/><rect x="4.3" y="9.8" width="5.4" height="1.1" fill="#fff"/></svg>
<div class="t " style="left:476.6px;top:858.85px;font-size:13.5px;line-height:17.5px;color:#f2f200;letter-spacing:0.082px;">ResetMode.cs</div>
<svg style="left:456px;top:884px;" width="14" height="14" viewBox="0 0 14 14"><defs><linearGradient id="fg11" x1="0" y1="0" x2="0" y2="1"><stop offset="0" stop-color="#f0a01c"/><stop offset="1" stop-color="#eaaa44"/></linearGradient></defs><rect width="14" height="14" rx="2" fill="url(#fg11)"/><rect x="6.4" y="5.5" width="1.2" height="3.6" fill="#fff"/><rect x="4.3" y="6.8" width="5.4" height="1.1" fill="#fff"/><rect x="4.3" y="9.8" width="5.4" height="1.1" fill="#fff"/></svg>
<div class="t " style="left:476.6px;top:882.85px;font-size:13.5px;line-height:17.5px;color:#f2f200;letter-spacing:0.228px;">Statistics.cs</div>
<svg style="left:456px;top:908px;" width="14" height="14" viewBox="0 0 14 14"><defs><linearGradient id="fg12" x1="0" y1="0" x2="0" y2="1"><stop offset="0" stop-color="#f0a01c"/><stop offset="1" stop-color="#eaaa44"/></linearGradient></defs><rect width="14" height="14" rx="2" fill="url(#fg12)"/><rect x="6.4" y="5.5" width="1.2" height="3.6" fill="#fff"/><rect x="4.3" y="6.8" width="5.4" height="1.1" fill="#fff"/><rect x="4.3" y="9.8" width="5.4" height="1.1" fill="#fff"/></svg>
<div class="t " style="left:476.6px;top:906.85px;font-size:13.5px;line-height:17.5px;color:#f2f200;letter-spacing:0.214px;">Tag.cs</div>
<svg style="left:456px;top:932px;" width="14" height="14" viewBox="0 0 14 14"><defs><linearGradient id="fg13" x1="0" y1="0" x2="0" y2="1"><stop offset="0" stop-color="#f0a01c"/><stop offset="1" stop-color="#eaaa44"/></linearGradient></defs><rect width="14" height="14" rx="2" fill="url(#fg13)"/><rect x="6.4" y="5.5" width="1.2" height="3.6" fill="#fff"/><rect x="4.3" y="6.8" width="5.4" height="1.1" fill="#fff"/><rect x="4.3" y="9.8" width="5.4" height="1.1" fill="#fff"/></svg>
<div class="t " style="left:476.6px;top:930.85px;font-size:13.5px;line-height:17.5px;color:#f2f200;letter-spacing:0.124px;">Watcher.cs</div>
<svg style="left:428px;top:960px;" width="9" height="6" viewBox="0 0 9 6"><path d="M0 0 H8.8 L4.4 5.4 Z" fill="#f0f000"/></svg>
<svg style="left:440px;top:956.8px;" width="15" height="12" viewBox="0 0 15 12"><path d="M0.6 11.2 V1.4 Q0.6 0.6 1.4 0.6 H4.6 L6 2.2 H11.4 Q12.2 2.2 12.2 3 V4.4" fill="none" stroke="#d0a010" stroke-width="1.1"/><path d="M0.7 11.3 L2.6 4.5 H14.2 L12.2 11.3 Z" fill="none" stroke="#d0a010" stroke-width="1.1"/></svg>
<div class="t " style="left:460.5px;top:954.85px;font-size:13.5px;line-height:17.5px;color:#f2f200;letter-spacing:-0.091px;">Resources</div>
<svg style="left:444px;top:984px;" width="9" height="6" viewBox="0 0 9 6"><path d="M0 0 H8.8 L4.4 5.4 Z" fill="#f0f000"/></svg>
<svg style="left:456px;top:980.8px;" width="15" height="12" viewBox="0 0 15 12"><path d="M0.6 11.2 V1.4 Q0.6 0.6 1.4 0.6 H4.6 L6 2.2 H11.4 Q12.2 2.2 12.2 3 V4.4" fill="none" stroke="#d0a010" stroke-width="1.1"/><path d="M0.7 11.3 L2.6 4.5 H14.2 L12.2 11.3 Z" fill="none" stroke="#d0a010" stroke-width="1.1"/></svg>
<div class="t " style="left:476.5px;top:978.85px;font-size:13.5px;line-height:17.5px;color:#f2f200;letter-spacing:0.059px;">Locales</div>
<svg style="left:472px;top:1004px;" width="14" height="14" viewBox="0 0 14 14"><defs><linearGradient id="fg16" x1="0" y1="0" x2="0" y2="1"><stop offset="0" stop-color="#f0a01c"/><stop offset="1" stop-color="#eaaa44"/></linearGradient></defs><rect width="14" height="14" rx="2" fill="url(#fg16)"/><rect x="6.4" y="5.5" width="1.2" height="3.6" fill="#fff"/><rect x="4.3" y="6.8" width="5.4" height="1.1" fill="#fff"/><rect x="4.3" y="9.8" width="5.4" height="1.1" fill="#fff"/></svg>
<div class="t " style="left:492.6px;top:1002.85px;font-size:13.5px;line-height:17.5px;color:#f2f200;letter-spacing:-0.295px;">de_DE.axaml</div>
<div class="abs " style="left:408px;top:1018px;width:478px;height:1px;background:#94653a"></div>
<div class="abs " style="left:403px;top:1019px;width:486px;height:2px;background:#131313"></div>
<!-- diff -->
<div class="abs " style="left:891px;top:580px;width:1025px;height:439px;border:1px solid #94653a;background:#0d333b"></div>
<div class="abs " style="left:892px;top:581px;width:1023px;height:25px;background:#131313"></div>
<div class="abs " style="left:892px;top:606px;width:1023px;height:1px;background:#94653a"></div>
<svg style="left:900px;top:587.4px;" width="10" height="12" viewBox="0 0 10 12"><path d="M0.6 0 H5.8 V4 H10 V11.4 Q10 12 9.4 12 H0.6 Q0 12 0 11.4 V0.6 Q0 0 0.6 0 Z" fill="#f0f000"/><path d="M2.2 7.2 H8 M2.2 9.4 H8" stroke="#7c7c00" stroke-width="1.1"/></svg>
<div class="t " style="left:915.8px;top:586.6px;font-size:12px;line-height:16px;color:#f0f000;letter-spacing:-0.071px;">src/Models/RepositorySettings.cs</div>
<svg style="left:1615px;top:591.0px;" width="12" height="7" viewBox="0 0 12 7"><path d="M0.8 6.4 L6 1.2 L11.2 6.4" fill="none" stroke="#d4d000" stroke-width="1.9"/></svg>
<svg style="left:1643px;top:591.0px;" width="12" height="7" viewBox="0 0 12 7"><path d="M0.8 0.6 L6 5.8 L11.2 0.6" fill="none" stroke="#d4d000" stroke-width="1.9"/></svg>
<div class="t mono" style="left:1670.4px;top:586.5px;font-size:13px;line-height:17px;color:#d4d000;letter-spacing:-1.6px;font-size:13px;-webkit-text-stroke:0.4px;">{}</div>
<svg style="left:1698.6px;top:588.8000000000001px;" width="13" height="12" viewBox="0 0 13 12"><path d="M4.8 1.2 H12.4 M6.6 5.8 H12.4 M4.8 10.4 H12.4" stroke="#d4d000" stroke-width="1"/><path d="M0 5.8 H5 M2.5 3.3 V8.3" stroke="#d4d000" stroke-width="1.1"/></svg>
<svg style="left:1726.6px;top:588.8000000000001px;" width="13" height="12" viewBox="0 0 13 12"><path d="M4.8 1.2 H12.4 M6.6 5.8 H12.4 M4.8 10.4 H12.4" stroke="#e0103c" stroke-width="1"/><path d="M0 5.8 H5" stroke="#e0103c" stroke-width="1.1"/></svg>
<svg style="left:1755px;top:588.6px;" width="13" height="12" viewBox="0 0 13 12"><path d="M2.4 0.4 V11.6" stroke="#d4d000" stroke-width="1.2"/><path d="M0 3 L2.4 0.2 L4.8 3 Z M0 9 L2.4 11.8 L4.8 9 Z" fill="#d4d000"/><path d="M6 1.4 H13 M6 6 H13 M6 10.6 H13" stroke="#d4d000" stroke-width="1.6"/></svg>
<div class="abs " style="left:1782.6px;top:589.2px;width:13.6px;height:10.8px;background:#f0f000;border-radius:1.5px"></div>
<div class="t " style="left:1785.8px;top:587.8000000000001px;font-size:10px;line-height:14px;color:#131313;font-weight:bold;font-family:"Liberation Serif",serif;">A</div>
<svg style="left:1811px;top:592.2px;" width="12" height="5" viewBox="0 0 12 5"><path d="M0.7 0.4 V3 H11 V0.4" fill="none" stroke="#d4d000" stroke-width="1.5"/></svg>
<svg style="left:1838.8px;top:588.8000000000001px;" width="9" height="12" viewBox="0 0 9 12"><path d="M8.2 0.7 H3.2 A2.6 2.600 0 0 0 3.2 5.9 H4.600 M4.700 0.7 V10.8 M7 0.7 V10.8 M3.2 10.9 H8.3" stroke="#d4d000" stroke-width="1.15" fill="none"/></svg>
<svg style="left:1866.6px;top:589.0px;" width="13" height="11" viewBox="0 0 13 11"><rect x="0.6" y="0.6" width="11.4" height="9.8" fill="none" stroke="#2cc8e8" stroke-width="1.2"/><path d="M6.3 0.6 V10.4" stroke="#2cc8e8" stroke-width="1.2"/></svg>
<svg style="left:1894.4px;top:588.2px;" width="13" height="12" viewBox="0 0 13 12"><path d="M5 2.6 H0.8 V11.4 H10 V8" fill="none" stroke="#d4d000" stroke-width="1.4"/><path d="M3 9 Q3.2 3.4 8.2 3.2 V0.4 L12.8 4.4 L8.2 8.2 V5.6 Q4.8 5.6 3 9 Z" fill="#d4d000"/></svg>
<div class="abs " style="left:892px;top:607.05px;width:503px;height:409px;overflow:hidden"><div class="t mono" style="left:53px;top:0.8px;line-height:17.55px;color:#ff2a52;font-style:italic;">@@ -1,5 +1,9 @@</div><div class="abs " style="left:53px;top:17.55px;width:450px;height:17.55px;background:#960239"></div><div class="t mono" style="left:0;width:32px;text-align:right;top:18.35px;line-height:17.55px;color:#f0f020">1</div><div class="abs " style="left:43.5px;top:26.125000000000004px;width:5.2px;height:1.4px;background:#f01020"></div><div class="t mono" style="left:53px;top:18.35px;line-height:17.55px;color:#f6f62a;">using Avalonia.Collections;</div><div class="abs " style="left:53px;top:35.1px;width:450px;height:17.55px;background:#cfc000"></div><div class="abs " style="left:53px;top:52.650000000000006px;width:450px;height:17.55px;background:#cfc000"></div><div class="abs " style="left:53px;top:52.150000000000006px;width:450px;height:1px;background:rgba(0,0,0,0.17)"></div><div class="abs " style="left:53px;top:70.2px;width:450px;height:17.55px;background:#cfc000"></div><div class="abs " style="left:53px;top:69.7px;width:450px;height:1px;background:rgba(0,0,0,0.17)"></div><div class="abs " style="left:53px;top:87.75px;width:450px;height:17.55px;background:#cfc000"></div><div class="abs " style="left:53px;top:87.25px;width:450px;height:1px;background:rgba(0,0,0,0.17)"></div><div class="t mono" style="left:0;width:32px;text-align:right;top:106.10000000000001px;line-height:17.55px;color:#f0f020">2</div><div class="t mono" style="left:0;width:32px;text-align:right;top:123.65px;line-height:17.55px;color:#f0f020">3</div><div class="t mono" style="left:53px;top:123.65px;line-height:17.55px;color:#f6f62a;">namespace SourceGit.Models</div><div class="t mono" style="left:0;width:32px;text-align:right;top:141.20000000000002px;line-height:17.55px;color:#f0f020">4</div><div class="t mono" style="left:53px;top:141.20000000000002px;line-height:17.55px;color:#f6f62a;">{</div><div class="t mono" style="left:0;width:32px;text-align:right;top:158.75000000000003px;line-height:17.55px;color:#f0f020">5</div><div class="t mono" style="left:53px;top:158.75000000000003px;line-height:17.55px;color:#f6f62a;">    public class RepositorySettings</div><div class="t mono" style="left:53px;top:176.3px;line-height:17.55px;color:#ff2a52;font-style:italic;">@@ -75,13 +79,13 @@ namespace SourceGit.Models</div><div class="t mono" style="left:0;width:32px;text-align:right;top:193.85000000000002px;line-height:17.55px;color:#f0f020">75</div><div class="t mono" style="left:53px;top:193.85000000000002px;line-height:17.55px;color:#f6f62a;">            get;</div><div class="t mono" style="left:0;width:32px;text-align:right;top:211.40000000000003px;line-height:17.55px;color:#f0f020">76</div><div class="t mono" style="left:53px;top:211.40000000000003px;line-height:17.55px;color:#f6f62a;">            set;</div><div class="t mono" style="left:0;width:32px;text-align:right;top:228.95000000000002px;line-height:17.55px;color:#f0f020">77</div><div class="t mono" style="left:53px;top:228.95000000000002px;line-height:17.55px;color:#f6f62a;">        } = true;</div><div class="t mono" style="left:0;width:32px;text-align:right;top:246.50000000000003px;line-height:17.55px;color:#f0f020">78</div><div class="abs " style="left:53px;top:263.25px;width:450px;height:17.55px;background:#960239"></div><div class="abs " style="left:271.4px;top:263.25px;width:46.8px;height:17.55px;background:#f04060"></div><div class="abs " style="left:333.8px;top:263.25px;width:54.6px;height:17.55px;background:#f04060"></div><div class="t mono" style="left:0;width:32px;text-align:right;top:264.05px;line-height:17.55px;color:#f0f020">79</div><div class="abs " style="left:43.5px;top:271.825px;width:5.2px;height:1.4px;background:#f01020"></div><div class="t mono" style="left:53px;top:264.05px;line-height:17.55px;color:#f6f62a;">        public AvaloniaList&lt;string&gt; Filters</div><div class="t mono" style="left:0;width:32px;text-align:right;top:281.6px;line-height:17.55px;color:#f0f020">80</div><div class="t mono" style="left:53px;top:281.6px;line-height:17.55px;color:#f6f62a;">        {</div><div class="t mono" style="left:0;width:32px;text-align:right;top:299.15000000000003px;line-height:17.55px;color:#f0f020">81</div><div class="t mono" style="left:53px;top:299.15000000000003px;line-height:17.55px;color:#f6f62a;">            get;</div><div class="t mono" style="left:0;width:32px;text-align:right;top:316.70000000000005px;line-height:17.55px;color:#f0f020">82</div><div class="t mono" style="left:53px;top:316.70000000000005px;line-height:17.55px;color:#f6f62a;">            set;</div><div class="abs " style="left:53px;top:333.45px;width:450px;height:17.55px;background:#960239"></div><div class="abs " style="left:279.2px;top:333.45px;width:46.8px;height:17.55px;background:#f04060"></div><div class="t mono" style="left:0;width:32px;text-align:right;top:334.25px;line-height:17.55px;color:#f0f020">83</div><div class="abs " style="left:43.5px;top:342.025px;width:5.2px;height:1.4px;background:#f01020"></div><div class="t mono" style="left:53px;top:334.25px;line-height:17.55px;color:#f6f62a;">        } = new AvaloniaList&lt;string&gt;();</div><div class="t mono" style="left:0;width:32px;text-align:right;top:351.8px;line-height:17.55px;color:#f0f020">84</div><div class="t mono" style="left:0;width:32px;text-align:right;top:369.35px;line-height:17.55px;color:#f0f020">85</div><div class="t mono" style="left:53px;top:369.35px;line-height:17.55px;color:#f6f62a;">        public AvaloniaList&lt;CommitTemplate&gt; CommitTemplates</div><div class="t mono" style="left:0;width:32px;text-align:right;top:386.90000000000003px;line-height:17.55px;color:#f0f020">86</div><div class="t mono" style="left:53px;top:386.90000000000003px;line-height:17.55px;color:#f6f62a;">        {</div><div class="t mono" style="left:0;width:32px;text-align:right;top:404.45000000000005px;line-height:17.55px;color:#f0f020">87</div><div class="t mono" style="left:53px;top:404.45000000000005px;line-height:17.55px;color:#f6f62a;">            get;</div></div>
<div class="abs " style="left:1398px;top:607.05px;width:504px;height:409px;overflow:hidden"><div class="t mono" style="left:53px;top:0.8px;line-height:17.55px;color:#ff2a52;font-style:italic;">@@ -1,5 +1,9 @@</div><div class="abs " style="left:53px;top:17.55px;width:449px;height:17.55px;background:#3c4c62"></div><div class="t mono" style="left:0;width:32.59999999999991px;text-align:right;top:18.35px;line-height:17.55px;color:#f0f020">1</div><div class="abs " style="left:42.59999999999991px;top:26.175000000000004px;width:6.2px;height:1.5px;background:#0c940c"></div><div class="abs " style="left:44.94999999999991px;top:23.225px;width:1.5px;height:7.2px;background:#0c940c"></div><div class="t mono" style="left:53px;top:18.35px;line-height:17.55px;color:#f6f62a;">using System;</div><div class="abs " style="left:53px;top:35.1px;width:449px;height:17.55px;background:#3c4c62"></div><div class="abs " style="left:53px;top:34.6px;width:449px;height:1px;background:rgba(0,0,0,0.10)"></div><div class="t mono" style="left:0;width:32.59999999999991px;text-align:right;top:35.9px;line-height:17.55px;color:#f0f020">2</div><div class="abs " style="left:42.59999999999991px;top:43.725px;width:6.2px;height:1.5px;background:#0c940c"></div><div class="abs " style="left:44.94999999999991px;top:40.775px;width:1.5px;height:7.2px;background:#0c940c"></div><div class="t mono" style="left:53px;top:35.9px;line-height:17.55px;color:#f6f62a;">using System.Collections.Generic;</div><div class="abs " style="left:53px;top:52.650000000000006px;width:449px;height:17.55px;background:#3c4c62"></div><div class="abs " style="left:53px;top:52.150000000000006px;width:449px;height:1px;background:rgba(0,0,0,0.10)"></div><div class="t mono" style="left:0;width:32.59999999999991px;text-align:right;top:53.45px;line-height:17.55px;color:#f0f020">3</div><div class="abs " style="left:42.59999999999991px;top:61.275000000000006px;width:6.2px;height:1.5px;background:#0c940c"></div><div class="abs " style="left:44.94999999999991px;top:58.325px;width:1.5px;height:7.2px;background:#0c940c"></div><div class="t mono" style="left:53px;top:53.45px;line-height:17.55px;color:#f6f62a;">using System.Text;</div><div class="abs " style="left:53px;top:70.2px;width:449px;height:17.55px;background:#3c4c62"></div><div class="abs " style="left:53px;top:69.7px;width:449px;height:1px;background:rgba(0,0,0,0.10)"></div><div class="t mono" style="left:0;width:32.59999999999991px;text-align:right;top:71.0px;line-height:17.55px;color:#f0f020">4</div><div class="abs " style="left:42.59999999999991px;top:78.825px;width:6.2px;height:1.5px;background:#0c940c"></div><div class="abs " style="left:44.94999999999991px;top:75.87500000000001px;width:1.5px;height:7.2px;background:#0c940c"></div><div class="abs " style="left:53px;top:87.75px;width:449px;height:17.55px;background:#3c4c62"></div><div class="abs " style="left:53px;top:87.25px;width:449px;height:1px;background:rgba(0,0,0,0.10)"></div><div class="t mono" style="left:0;width:32.59999999999991px;text-align:right;top:88.55px;line-height:17.55px;color:#f0f020">5</div><div class="abs " style="left:42.59999999999991px;top:96.375px;width:6.2px;height:1.5px;background:#0c940c"></div><div class="abs " style="left:44.94999999999991px;top:93.42500000000001px;width:1.5px;height:7.2px;background:#0c940c"></div><div class="t mono" style="left:53px;top:88.55px;line-height:17.55px;color:#f6f62a;">using Avalonia.Collections;</div><div class="t mono" style="left:0;width:32.59999999999991px;text-align:right;top:106.10000000000001px;line-height:17.55px;color:#f0f020">6</div><div class="t mono" style="left:0;width:32.59999999999991px;text-align:right;top:123.65px;line-height:17.55px;color:#f0f020">7</div><div class="t mono" style="left:53px;top:123.65px;line-height:17.55px;color:#f6f62a;">namespace SourceGit.Models</div><div class="t mono" style="left:0;width:32.59999999999991px;text-align:right;top:141.20000000000002px;line-height:17.55px;color:#f0f020">8</div><div class="t mono" style="left:53px;top:141.20000000000002px;line-height:17.55px;color:#f6f62a;">{</div><div class="t mono" style="left:0;width:32.59999999999991px;text-align:right;top:158.75000000000003px;line-height:17.55px;color:#f0f020">9</div><div class="t mono" style="left:53px;top:158.75000000000003px;line-height:17.55px;color:#f6f62a;">    public class RepositorySettings</div><div class="t mono" style="left:53px;top:176.3px;line-height:17.55px;color:#ff2a52;font-style:italic;">@@ -75,13 +79,13 @@ namespace SourceGit.Models</div><div class="t mono" style="left:0;width:32.59999999999991px;text-align:right;top:193.85000000000002px;line-height:17.55px;color:#f0f020">79</div><div class="t mono" style="left:53px;top:193.85000000000002px;line-height:17.55px;color:#f6f62a;">            get;</div><div class="t mono" style="left:0;width:32.59999999999991px;text-align:right;top:211.40000000000003px;line-height:17.55px;color:#f0f020">80</div><div class="t mono" style="left:53px;top:211.40000000000003px;line-height:17.55px;color:#f6f62a;">            set;</div><div class="t mono" style="left:0;width:32.59999999999991px;text-align:right;top:228.95000000000002px;line-height:17.55px;color:#f0f020">81</div><div class="t mono" style="left:53px;top:228.95000000000002px;line-height:17.55px;color:#f6f62a;">        } = true;</div><div class="t mono" style="left:0;width:32.59999999999991px;text-align:right;top:246.50000000000003px;line-height:17.55px;color:#f0f020">82</div><div class="abs " style="left:53px;top:263.25px;width:449px;height:17.55px;background:#3c4c62"></div><div class="abs " style="left:271.4px;top:263.25px;width:46.8px;height:17.55px;background:#0a9cc8"></div><div class="abs " style="left:333.8px;top:263.25px;width:124.8px;height:17.55px;background:#0a9cc8"></div><div class="t mono" style="left:0;width:32.59999999999991px;text-align:right;top:264.05px;line-height:17.55px;color:#f0f020">83</div><div class="abs " style="left:42.59999999999991px;top:271.875px;width:6.2px;height:1.5px;background:#0c940c"></div><div class="abs " style="left:44.94999999999991px;top:268.92499999999995px;width:1.5px;height:7.2px;background:#0c940c"></div><div class="t mono" style="left:53px;top:264.05px;line-height:17.55px;color:#f6f62a;">        public AvaloniaList&lt;Filter&gt; HistoriesFilters</div><div class="t mono" style="left:0;width:32.59999999999991px;text-align:right;top:281.6px;line-height:17.55px;color:#f0f020">84</div><div class="t mono" style="left:53px;top:281.6px;line-height:17.55px;color:#f6f62a;">        {</div><div class="t mono" style="left:0;width:32.59999999999991px;text-align:right;top:299.15000000000003px;line-height:17.55px;color:#f0f020">85</div><div class="t mono" style="left:53px;top:299.15000000000003px;line-height:17.55px;color:#f6f62a;">            get;</div><div class="t mono" style="left:0;width:32.59999999999991px;text-align:right;top:316.70000000000005px;line-height:17.55px;color:#f0f020">86</div><div class="t mono" style="left:53px;top:316.70000000000005px;line-height:17.55px;color:#f6f62a;">            set;</div><div class="abs " style="left:53px;top:333.45px;width:449px;height:17.55px;background:#3c4c62"></div><div class="abs " style="left:279.2px;top:333.45px;width:46.8px;height:17.55px;background:#0a9cc8"></div><div class="t mono" style="left:0;width:32.59999999999991px;text-align:right;top:334.25px;line-height:17.55px;color:#f0f020">87</div><div class="abs " style="left:42.59999999999991px;top:342.075px;width:6.2px;height:1.5px;background:#0c940c"></div><div class="abs " style="left:44.94999999999991px;top:339.12499999999994px;width:1.5px;height:7.2px;background:#0c940c"></div><div class="t mono" style="left:53px;top:334.25px;line-height:17.55px;color:#f6f62a;">        } = new AvaloniaList&lt;Filter&gt;();</div><div class="t mono" style="left:0;width:32.59999999999991px;text-align:right;top:351.8px;line-height:17.55px;color:#f0f020">88</div><div class="t mono" style="left:0;width:32.59999999999991px;text-align:right;top:369.35px;line-height:17.55px;color:#f0f020">89</div><div class="t mono" style="left:53px;top:369.35px;line-height:17.55px;color:#f6f62a;">        public AvaloniaList&lt;CommitTemplate&gt; CommitTemplates</div><div class="t mono" style="left:0;width:32.59999999999991px;text-align:right;top:386.90000000000003px;line-height:17.55px;color:#f0f020">90</div><div class="t mono" style="left:53px;top:386.90000000000003px;line-height:17.55px;color:#f6f62a;">        {</div><div class="t mono" style="left:0;width:32.59999999999991px;text-align:right;top:404.45000000000005px;line-height:17.55px;color:#f0f020">91</div><div class="t mono" style="left:53px;top:404.45000000000005px;line-height:17.55px;color:#f6f62a;">            get;</div></div>
<div class="abs " style="left:931.4px;top:607px;width:1.4px;height:411px;background:#62583a"></div>
<div class="abs " style="left:1397px;top:607px;width:1px;height:411px;background:#94653a"></div>
<div class="abs " style="left:1437.8px;top:607px;width:1.4px;height:411px;background:#62583a"></div>
<div class="abs " style="left:1902px;top:607px;width:1px;height:411px;background:#94653a"></div>
<div class="abs " style="left:1393px;top:619px;width:2px;height:33.5px;background:#8e979c;border-radius:1px"></div>
<div class="abs " style="left:1898.6px;top:619px;width:2px;height:33.5px;background:#8e979c;border-radius:1px"></div>
<div class="abs " style="left:903px;top:1014.6px;width:457px;height:2px;background:#7c868c;border-radius:1px"></div>
<div class="abs " style="left:1410px;top:1014.6px;width:455px;height:2px;background:#7c868c;border-radius:1px"></div>
<div class="abs " style="left:1903px;top:607px;width:12px;height:411px;overflow:hidden"><div class="abs " style="left:0px;top:0px;width:12px;height:42px;background:#173f5c"></div><div class="abs " style="left:0px;top:0px;width:12px;height:1.4px;background:#3c6cc8"></div><div class="abs " style="left:0px;top:41px;width:12px;height:1.6px;background:#3c6cc8"></div><div class="abs " style="left:6px;top:1.6px;width:6px;height:8.6px;background:#46588a"></div><div class="abs " style="left:0px;top:2px;width:5.6px;height:1.4px;background:#9a1060"></div><div class="abs " style="left:0px;top:26px;width:5.6px;height:1.4px;background:#9a1060"></div><div class="abs " style="left:6px;top:26px;width:6px;height:1.6px;background:#46588a"></div><div class="abs " style="left:0px;top:33px;width:5.6px;height:1.4px;background:#9a1060"></div><div class="abs " style="left:6px;top:33px;width:6px;height:1.6px;background:#46588a"></div><div class="abs " style="left:6px;top:51px;width:6px;height:353px;background:#3c4c62"></div></div>
</body></html>
